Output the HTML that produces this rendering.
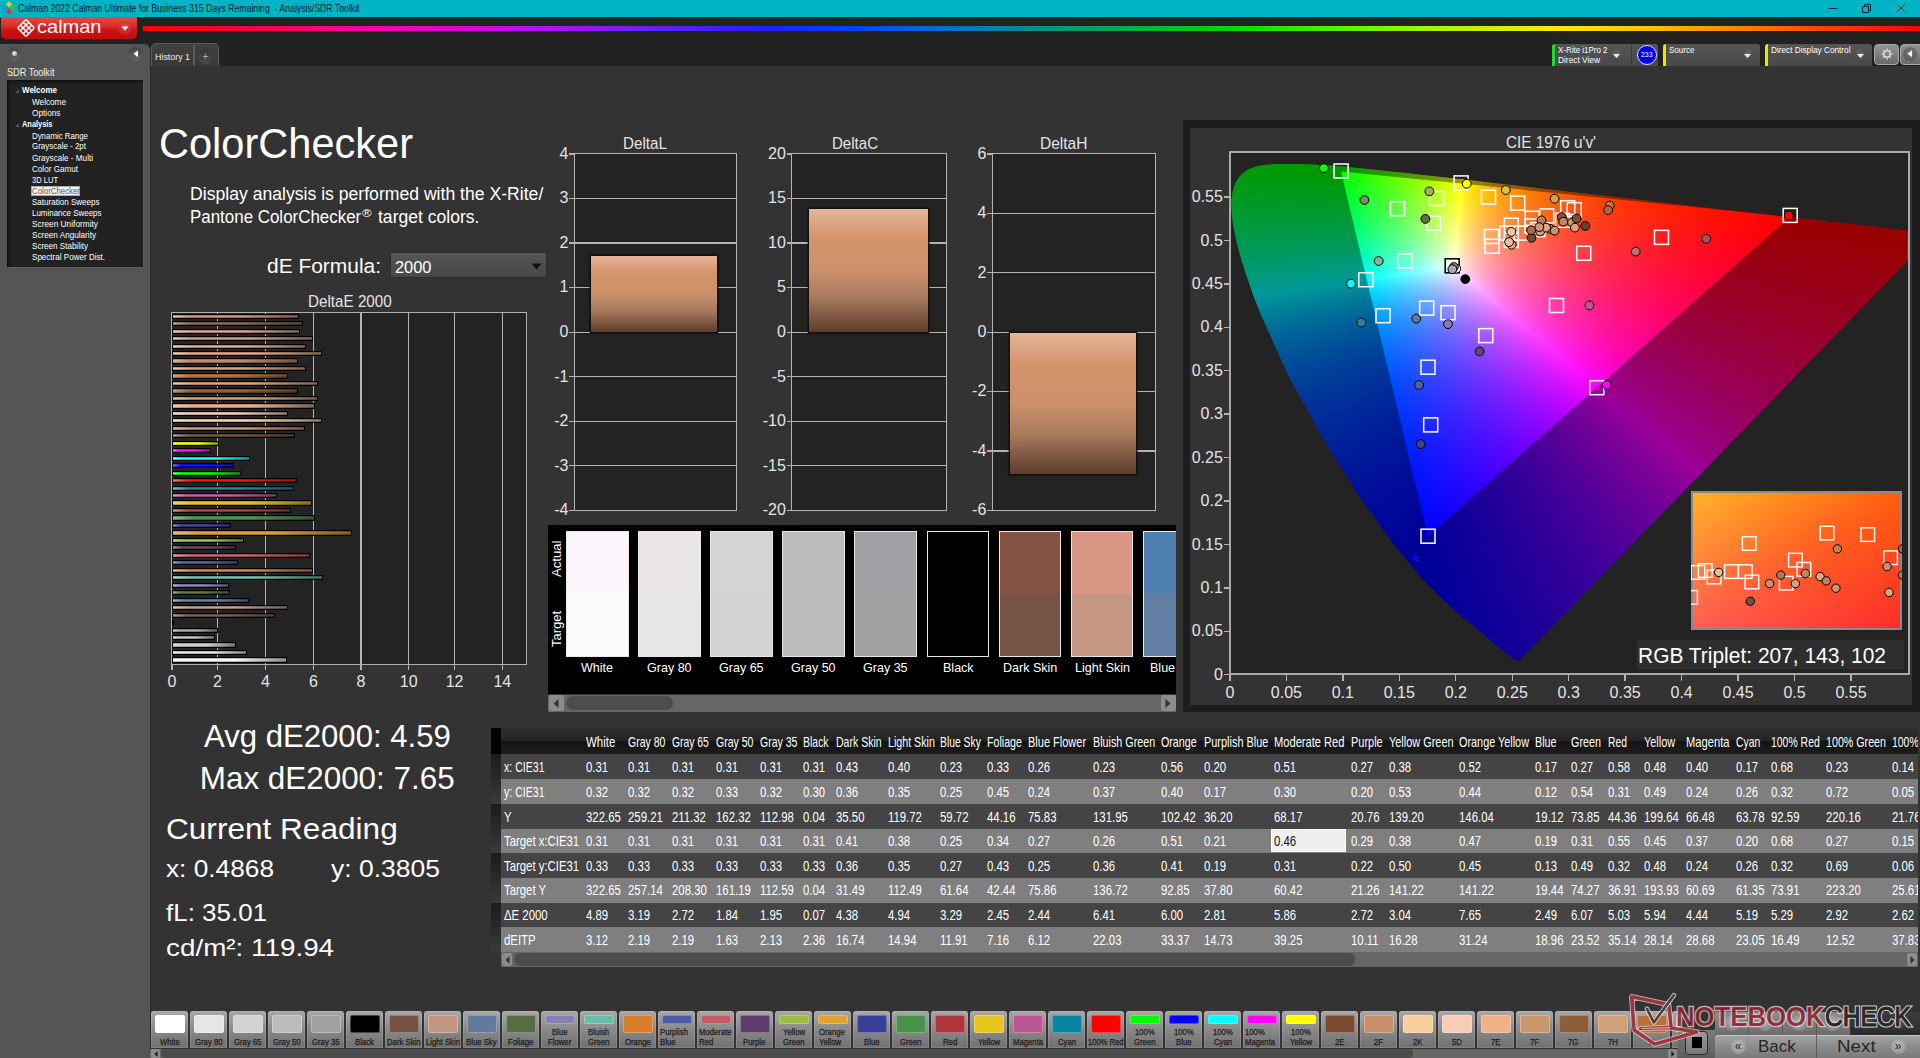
<!DOCTYPE html><html><head><meta charset="utf-8"><title>Calman ColorChecker</title><style>
html,body{margin:0;padding:0;background:#333;overflow:hidden}body{width:1920px;height:1058px;position:relative;font-family:"Liberation Sans", sans-serif}
#app{position:absolute;left:0;top:0;width:1920px;height:1058px;overflow:hidden;background:#333}
#app div,#app svg,#app span{position:absolute}.t{white-space:pre;transform-origin:0 50%;display:block}
</style></head><body><div id="app">
<div style="left:0px;top:0px;width:1920px;height:17px;background:#00b4c5"></div>
<svg style="left:2px;top:1px" width="14" height="14" viewBox="0 0 14 14"><g transform="rotate(45 7 7)"><rect x="2.2" y="2.2" width="4.4" height="4.4" fill="#f2c21a"/><rect x="7.4" y="2.2" width="4.4" height="4.4" fill="#35c435"/><rect x="2.2" y="7.4" width="4.4" height="4.4" fill="#2d8de0"/><rect x="7.4" y="7.4" width="4.4" height="4.4" fill="#e0305a"/></g></svg>
<span class="t" style="left:17.7px;top:3.73px;font-size:10px;line-height:10px;color:#041a20;transform:scaleX(0.8695);white-space:pre;">Calman 2022 Calman Ultimate for Business 315 Days Remaining  - Analysis/SDR Toolkit</span>
<svg style="left:1820px;top:0" width="100" height="17" viewBox="0 0 100 17"><g stroke="#0a2a30" stroke-width="1" fill="none"><path d="M8.5 8.5h9"/><path d="M42.5 6.5h6v6h-6zM44.5 6.5v-2h6v6h-2"/><path d="M77 4l8 8M85 4l-8 8"/></g></svg>
<div style="left:0px;top:17px;width:1920px;height:49px;background:#222"></div>
<div style="left:142.5px;top:26px;width:1777.5px;height:4.5px;background:linear-gradient(90deg,#ff0000 0%,#ff0030 5%,#ff0090 11%,#e800d0 17%,#b010ff 23%,#7020ff 28%,#2020ff 35%,#0040ff 40%,#0070d0 45%,#009090 50%,#00b040 56%,#00d800 61%,#40f000 66%,#90f800 71%,#d0f000 76%,#ffe800 80%,#ffc000 85%,#ff8000 90%,#ff4000 95%,#ff0000 100%)"></div>
<div style="left:1px;top:17.2px;width:135.7px;height:22.3px;background:linear-gradient(#e44a4a,#dc2a2a 45%,#cf1414 55%,#c40c0c);border-radius:0 0 5px 5px;box-shadow:0 1px 0 #6a1010"></div>
<svg style="left:16px;top:18px" width="20" height="20" viewBox="0 0 20 20"><g transform="rotate(45 10 10)" fill="none" stroke="#fff" stroke-width="1.5"><rect x="4" y="4" width="12" height="12" rx="1.5"/><path d="M8 4v12M12 4v12M4 8h12M4 12h12"/></g></svg>
<span class="t" style="left:37px;top:18.16px;font-size:18px;line-height:18px;color:#fff;transform:scaleX(1.1115);">calman</span>
<div style="left:117.5px;top:21px;width:14px;height:14px;border-radius:50%;background:radial-gradient(circle at 50% 35%,#e24a4a,#b81212)"></div>
<svg style="left:120.5px;top:26px" width="8" height="5" viewBox="0 0 8 5"><path d="M0.5 0.5h7L4 4.5z" fill="#fff"/></svg>
<div style="left:0px;top:43.5px;width:150px;height:1015px;background:#555;border-radius:0 6px 0 0"></div>
<div style="left:150px;top:50px;width:1px;height:1008px;background:#2b2b2b"></div>
<div style="left:6.8px;top:46.7px;width:14.6px;height:14.6px;border-radius:50%;background:linear-gradient(#454545,#636363)"></div>
<div style="left:11.7px;top:51px;width:5px;height:5px;border-radius:50%;background:radial-gradient(circle at 40% 35%,#eee,#999)"></div>
<div style="left:128.3px;top:46.7px;width:14.6px;height:14.6px;border-radius:50%;background:linear-gradient(#454545,#636363)"></div>
<svg style="left:133px;top:50px" width="6" height="8" viewBox="0 0 6 8"><path d="M5 0.3v7L0.5 3.8z" fill="#fff"/></svg>
<span class="t" style="left:6.5px;top:67.31px;font-size:10.5px;line-height:10.5px;color:#f0f0f0;transform:scaleX(0.8688);">SDR Toolkit</span>
<div style="left:7px;top:79.5px;width:136px;height:187px;background:#222;box-shadow:inset 2px 2px 3px #111,1px 1px 0 #5e5e5e"></div>
<span class="t" style="left:21.7px;top:85.58px;font-size:9px;line-height:9px;color:#fff;font-weight:700;transform:scaleX(0.8892);">Welcome</span>
<span class="t" style="left:31.5px;top:97.58px;font-size:9px;line-height:9px;color:#fff;transform:scaleX(0.9101);">Welcome</span>
<span class="t" style="left:31.5px;top:108.58px;font-size:9px;line-height:9px;color:#fff;transform:scaleX(0.9184);">Options</span>
<span class="t" style="left:21.7px;top:119.58px;font-size:9px;line-height:9px;color:#fff;font-weight:700;transform:scaleX(0.8236);">Analysis</span>
<span class="t" style="left:31.5px;top:131.58px;font-size:9px;line-height:9px;color:#fff;transform:scaleX(0.8746);">Dynamic Range</span>
<span class="t" style="left:31.5px;top:142.48px;font-size:9px;line-height:9px;color:#fff;transform:scaleX(0.8848);">Grayscale - 2pt</span>
<span class="t" style="left:31.5px;top:153.78px;font-size:9px;line-height:9px;color:#fff;transform:scaleX(0.9035);">Grayscale - Multi</span>
<span class="t" style="left:31.5px;top:165.28px;font-size:9px;line-height:9px;color:#fff;transform:scaleX(0.9014);">Color Gamut</span>
<span class="t" style="left:31.5px;top:175.68px;font-size:9px;line-height:9px;color:#fff;transform:scaleX(0.8383);">3D LUT</span>
<div style="left:30.7px;top:185.5px;width:49.6px;height:10.2px;background:#f2f2f2;border:1px solid #aaa;box-sizing:border-box"></div>
<span class="t" style="left:31.5px;top:186.88px;font-size:9px;line-height:9px;color:#5a5a5a;transform:scaleX(0.8722);">ColorChecker</span>
<span class="t" style="left:31.5px;top:198.18px;font-size:9px;line-height:9px;color:#fff;transform:scaleX(0.8935);">Saturation Sweeps</span>
<span class="t" style="left:31.5px;top:208.98px;font-size:9px;line-height:9px;color:#fff;transform:scaleX(0.8846);">Luminance Sweeps</span>
<span class="t" style="left:31.5px;top:219.98px;font-size:9px;line-height:9px;color:#fff;transform:scaleX(0.9227);">Screen Uniformity</span>
<span class="t" style="left:31.5px;top:231.18px;font-size:9px;line-height:9px;color:#fff;transform:scaleX(0.9072);">Screen Angularity</span>
<span class="t" style="left:31.5px;top:241.98px;font-size:9px;line-height:9px;color:#fff;transform:scaleX(0.8956);">Screen Stability</span>
<span class="t" style="left:31.5px;top:253.18px;font-size:9px;line-height:9px;color:#fff;transform:scaleX(0.8954);">Spectral Power Dist.</span>
<svg style="left:14.5px;top:88.5px" width="4" height="4" viewBox="0 0 4 4"><path d="M4 0v4H0z" fill="#555"/></svg>
<svg style="left:14.5px;top:122.5px" width="4" height="4" viewBox="0 0 4 4"><path d="M4 0v4H0z" fill="#555"/></svg>
<div style="left:150.6px;top:43.2px;width:68.2px;height:23.3px;background:linear-gradient(#414141,#383838);border:1.5px solid #5c5c5c;border-bottom:none;border-radius:5px 5px 0 0;box-sizing:border-box"></div>
<div style="left:193px;top:44.5px;width:1.5px;height:21.5px;background:#5c5c5c"></div>
<span class="t" style="left:154.6px;top:51.56px;font-size:9.5px;line-height:9.5px;color:#f0f0f0;transform:scaleX(0.9337);">History 1</span>
<div style="left:198px;top:49px;width:15px;height:15px;border-radius:50%;background:linear-gradient(#363636,#4c4c4c)"></div>
<span class="t" style="left:202.58px;top:51.73px;font-size:10px;line-height:10px;color:#aaa;">+</span>
<div style="left:1551.7px;top:43.5px;width:106.6px;height:22.5px;background:linear-gradient(#555,#4a4a4a);border-radius:3px 3px 0 0"></div>
<div style="left:1551.7px;top:43.5px;width:3.2px;height:22.5px;background:#22dd22;border-radius:3px 0 0 0"></div>
<span class="t" style="left:1557.5px;top:45.57px;font-size:8.3px;line-height:8.3px;color:#fff;transform:scaleX(0.9583);">X-Rite i1Pro 2</span>
<span class="t" style="left:1557.5px;top:55.97px;font-size:8.3px;line-height:8.3px;color:#fff;transform:scaleX(1.0045);">Direct View</span>
<div style="left:1609.7px;top:48px;width:14px;height:14px;border-radius:50%;background:radial-gradient(circle at 50% 35%,#636363,#3e3e3e)"></div>
<svg style="left:1613.2px;top:53.5px" width="7" height="4" viewBox="0 0 7 4"><path d="M0 0h7L3.5 4z" fill="#eee"/></svg>
<div style="left:1630.5px;top:45px;width:1px;height:21px;background:#3a3a3a"></div>
<div style="left:1636.5px;top:44.7px;width:20px;height:20px;border-radius:50%;background:#0000f0;border:1.2px solid #e0e0ff;box-sizing:border-box"></div>
<span class="t" style="left:1640.75px;top:51.07px;font-size:7.6px;line-height:7.6px;color:#fff;transform:scaleX(0.9075);">233</span>
<div style="left:1662.7px;top:43.5px;width:97.3px;height:22.5px;background:linear-gradient(#555,#4a4a4a);border-radius:3px 3px 0 0"></div>
<div style="left:1662.7px;top:43.5px;width:3.2px;height:22.5px;background:#e8e800;border-radius:3px 0 0 0"></div>
<span class="t" style="left:1668.5px;top:45.57px;font-size:8.3px;line-height:8.3px;color:#fff;transform:scaleX(0.9697);">Source</span>
<div style="left:1740.7px;top:48px;width:14px;height:14px;border-radius:50%;background:radial-gradient(circle at 50% 35%,#636363,#3e3e3e)"></div>
<svg style="left:1744.2px;top:53.5px" width="7" height="4" viewBox="0 0 7 4"><path d="M0 0h7L3.5 4z" fill="#eee"/></svg>
<div style="left:1765px;top:43.5px;width:106.7px;height:22.5px;background:linear-gradient(#555,#4a4a4a);border-radius:3px 3px 0 0"></div>
<div style="left:1765px;top:43.5px;width:3.2px;height:22.5px;background:#e8e800;border-radius:3px 0 0 0"></div>
<span class="t" style="left:1770.8px;top:45.57px;font-size:8.3px;line-height:8.3px;color:#fff;transform:scaleX(0.9908);">Direct Display Control</span>
<div style="left:1853px;top:48px;width:14px;height:14px;border-radius:50%;background:radial-gradient(circle at 50% 35%,#636363,#3e3e3e)"></div>
<svg style="left:1856.5px;top:53.5px" width="7" height="4" viewBox="0 0 7 4"><path d="M0 0h7L3.5 4z" fill="#eee"/></svg>
<div style="left:1874.3px;top:43.5px;width:25px;height:21.5px;background:linear-gradient(#939393,#6a6a6a);border-radius:4px;border:1px solid #a8a8a8;box-sizing:border-box"></div>
<svg style="left:1880px;top:47px" width="14" height="14" viewBox="0 0 14 14"><circle cx="7" cy="7" r="3.1" fill="none" stroke="#ddd" stroke-width="1.3"/><g stroke="#ddd" stroke-width="1.5"><path d="M7 1.6v1.8M7 10.6v1.8M1.6 7h1.8M10.6 7h1.8M3.2 3.2l1.3 1.3M9.5 9.5l1.3 1.3M3.2 10.8l1.3-1.3M9.5 4.5l1.3-1.3"/></g></svg>
<div style="left:1899.7px;top:43.5px;width:21px;height:21.5px;background:linear-gradient(#939393,#6a6a6a);border-radius:4px 0 0 4px;border:1px solid #a8a8a8;box-sizing:border-box"></div>
<div style="left:1903px;top:47px;width:14px;height:14px;border-radius:50%;background:radial-gradient(circle at 50% 40%,#7a7a7a,#505050)"></div>
<svg style="left:1907px;top:50px" width="6" height="8" viewBox="0 0 6 8"><path d="M5 0.3v7L0.5 3.8z" fill="#fff"/></svg>
<span class="t" style="left:159.3px;top:122.75px;font-size:42px;line-height:42px;color:#fff;transform:scaleX(0.9892);">ColorChecker</span>
<span class="t" style="left:190px;top:184.51px;font-size:18.3px;line-height:18.3px;color:#fff;transform:scaleX(0.9632);">Display analysis is performed with the X-Rite/</span>
<span class="t" style="left:190px;top:207.81px;font-size:18.3px;line-height:18.3px;color:#fff;transform:scaleX(0.9256);">Pantone ColorChecker</span>
<span class="t" style="left:362.3px;top:208.29px;font-size:11px;line-height:11px;color:#fff;transform:scaleX(1.1715);">®</span>
<span class="t" style="left:377.6px;top:207.81px;font-size:18.3px;line-height:18.3px;color:#fff;transform:scaleX(0.9596);">target colors.</span>
<span class="t" style="left:266.7px;top:255.65px;font-size:20.5px;line-height:20.5px;color:#fff;transform:scaleX(1.0210);">dE Formula:</span>
<div style="left:390px;top:251.7px;width:156.7px;height:26.6px;background:linear-gradient(#555,#484848);border:1px solid #2c2c2c;box-sizing:border-box;border-radius:1px"></div>
<span class="t" style="left:395px;top:258.53px;font-size:16.5px;line-height:16.5px;color:#fff;transform:scaleX(0.9940);">2000</span>
<svg style="left:530.5px;top:262.5px" width="11" height="7" viewBox="0 0 11 7"><path d="M0.5 0.5h10L5.5 6.5z" fill="#111"/></svg>
<span class="t" style="left:307.5px;top:293.76px;font-size:16px;line-height:16px;color:#e4e4e4;transform:scaleX(0.9510);">DeltaE 2000</span>
<div style="left:171.1px;top:312.1px;width:356px;height:353px;background:#232323;border:1.8px solid #b0b0b0;box-sizing:border-box"></div>
<div style="left:216.75px;top:313px;width:1.5px;height:351.2px;background:#b4b4b4"></div>
<div style="left:264.75px;top:313px;width:1.5px;height:351.2px;background:#b4b4b4"></div>
<div style="left:312.65px;top:313px;width:1.5px;height:351.2px;background:#b4b4b4"></div>
<div style="left:360.25px;top:313px;width:1.5px;height:351.2px;background:#b4b4b4"></div>
<div style="left:407.95px;top:313px;width:1.5px;height:351.2px;background:#b4b4b4"></div>
<div style="left:453.85px;top:313px;width:1.5px;height:351.2px;background:#b4b4b4"></div>
<div style="left:501.55px;top:313px;width:1.5px;height:351.2px;background:#b4b4b4"></div>
<div style="left:172px;top:657.4px;width:115.27px;height:5.2px;background:linear-gradient(180deg,rgba(0,0,0,.3),rgba(255,255,255,.12) 45%,rgba(0,0,0,0) 60%,rgba(0,0,0,.38)),linear-gradient(90deg,#ffffff 0,#ffffff 14%,#ffffff 55%,#8c8c8c 100%);border:solid #000;border-width:1.2px 1.2px 1.2px 0.4px;box-sizing:border-box"></div>
<div style="left:172px;top:649.93px;width:75.13px;height:5.2px;background:linear-gradient(180deg,rgba(0,0,0,.3),rgba(255,255,255,.12) 45%,rgba(0,0,0,0) 60%,rgba(0,0,0,.38)),linear-gradient(90deg,#f0f0f0 0,#e6e6e6 14%,#e6e6e6 55%,#7e7e7e 100%);border:solid #000;border-width:1.2px 1.2px 1.2px 0.4px;box-sizing:border-box"></div>
<div style="left:172px;top:642.45px;width:64.03px;height:5.2px;background:linear-gradient(180deg,rgba(0,0,0,.3),rgba(255,255,255,.12) 45%,rgba(0,0,0,0) 60%,rgba(0,0,0,.38)),linear-gradient(90deg,#e4e4e4 0,#d2d2d2 14%,#d2d2d2 55%,#737373 100%);border:solid #000;border-width:1.2px 1.2px 1.2px 0.4px;box-sizing:border-box"></div>
<div style="left:172px;top:634.98px;width:43.25px;height:5.2px;background:linear-gradient(180deg,rgba(0,0,0,.3),rgba(255,255,255,.12) 45%,rgba(0,0,0,0) 60%,rgba(0,0,0,.38)),linear-gradient(90deg,#d6d6d6 0,#bbbbbb 14%,#bbbbbb 55%,#666666 100%);border:solid #000;border-width:1.2px 1.2px 1.2px 0.4px;box-sizing:border-box"></div>
<div style="left:172px;top:627.51px;width:45.85px;height:5.2px;background:linear-gradient(180deg,rgba(0,0,0,.3),rgba(255,255,255,.12) 45%,rgba(0,0,0,0) 60%,rgba(0,0,0,.38)),linear-gradient(90deg,#c6c6c6 0,#a1a1a1 14%,#a1a1a1 55%,#585858 100%);border:solid #000;border-width:1.2px 1.2px 1.2px 0.4px;box-sizing:border-box"></div>
<div style="left:172px;top:620.03px;width:1.5px;height:5.2px;background:linear-gradient(180deg,rgba(0,0,0,.3),rgba(255,255,255,.12) 45%,rgba(0,0,0,0) 60%,rgba(0,0,0,.38)),linear-gradient(90deg,#666666 0,#000000 14%,#000000 55%,#000000 100%);border:solid #000;border-width:1.2px 1.2px 1.2px 0.4px;box-sizing:border-box"></div>
<div style="left:172px;top:612.56px;width:103.23px;height:5.2px;background:linear-gradient(180deg,rgba(0,0,0,.3),rgba(255,255,255,.12) 45%,rgba(0,0,0,0) 60%,rgba(0,0,0,.38)),linear-gradient(90deg,#ab978e 0,#735244 14%,#735244 55%,#3f2d25 100%);border:solid #000;border-width:1.2px 1.2px 1.2px 0.4px;box-sizing:border-box"></div>
<div style="left:172px;top:605.09px;width:116.45px;height:5.2px;background:linear-gradient(180deg,rgba(0,0,0,.3),rgba(255,255,255,.12) 45%,rgba(0,0,0,0) 60%,rgba(0,0,0,.38)),linear-gradient(90deg,#dac0b4 0,#c29682 14%,#c29682 55%,#6a5247 100%);border:solid #000;border-width:1.2px 1.2px 1.2px 0.4px;box-sizing:border-box"></div>
<div style="left:172px;top:597.62px;width:77.49px;height:5.2px;background:linear-gradient(180deg,rgba(0,0,0,.3),rgba(255,255,255,.12) 45%,rgba(0,0,0,0) 60%,rgba(0,0,0,.38)),linear-gradient(90deg,#a0afc4 0,#627a9d 14%,#627a9d 55%,#354356 100%);border:solid #000;border-width:1.2px 1.2px 1.2px 0.4px;box-sizing:border-box"></div>
<div style="left:172px;top:590.14px;width:57.65px;height:5.2px;background:linear-gradient(180deg,rgba(0,0,0,.3),rgba(255,255,255,.12) 45%,rgba(0,0,0,0) 60%,rgba(0,0,0,.38)),linear-gradient(90deg,#9aa68e 0,#576c43 14%,#576c43 55%,#2f3b24 100%);border:solid #000;border-width:1.2px 1.2px 1.2px 0.4px;box-sizing:border-box"></div>
<div style="left:172px;top:582.67px;width:57.42px;height:5.2px;background:linear-gradient(180deg,rgba(0,0,0,.3),rgba(255,255,255,.12) 45%,rgba(0,0,0,0) 60%,rgba(0,0,0,.38)),linear-gradient(90deg,#b5b2d0 0,#8580b1 14%,#8580b1 55%,#494661 100%);border:solid #000;border-width:1.2px 1.2px 1.2px 0.4px;box-sizing:border-box"></div>
<div style="left:172px;top:575.2px;width:151.16px;height:5.2px;background:linear-gradient(180deg,rgba(0,0,0,.3),rgba(255,255,255,.12) 45%,rgba(0,0,0,0) 60%,rgba(0,0,0,.38)),linear-gradient(90deg,#a3d7cc 0,#67bdaa 14%,#67bdaa 55%,#38675d 100%);border:solid #000;border-width:1.2px 1.2px 1.2px 0.4px;box-sizing:border-box"></div>
<div style="left:172px;top:567.72px;width:141.48px;height:5.2px;background:linear-gradient(180deg,rgba(0,0,0,.3),rgba(255,255,255,.12) 45%,rgba(0,0,0,0) 60%,rgba(0,0,0,.38)),linear-gradient(90deg,#e6b180 0,#d67e2c 14%,#d67e2c 55%,#754518 100%);border:solid #000;border-width:1.2px 1.2px 1.2px 0.4px;box-sizing:border-box"></div>
<div style="left:172px;top:560.25px;width:66.15px;height:5.2px;background:linear-gradient(180deg,rgba(0,0,0,.3),rgba(255,255,255,.12) 45%,rgba(0,0,0,0) 60%,rgba(0,0,0,.38)),linear-gradient(90deg,#969cc9 0,#505ba6 14%,#505ba6 55%,#2c325b 100%);border:solid #000;border-width:1.2px 1.2px 1.2px 0.4px;box-sizing:border-box"></div>
<div style="left:172px;top:552.78px;width:138.17px;height:5.2px;background:linear-gradient(180deg,rgba(0,0,0,.3),rgba(255,255,255,.12) 45%,rgba(0,0,0,0) 60%,rgba(0,0,0,.38)),linear-gradient(90deg,#d99ca1 0,#c15a63 14%,#c15a63 55%,#6a3136 100%);border:solid #000;border-width:1.2px 1.2px 1.2px 0.4px;box-sizing:border-box"></div>
<div style="left:172px;top:545.3px;width:64.03px;height:5.2px;background:linear-gradient(180deg,rgba(0,0,0,.3),rgba(255,255,255,.12) 45%,rgba(0,0,0,0) 60%,rgba(0,0,0,.38)),linear-gradient(90deg,#9e8aa6 0,#5e3c6c 14%,#5e3c6c 55%,#33213b 100%);border:solid #000;border-width:1.2px 1.2px 1.2px 0.4px;box-sizing:border-box"></div>
<div style="left:172px;top:537.83px;width:71.58px;height:5.2px;background:linear-gradient(180deg,rgba(0,0,0,.3),rgba(255,255,255,.12) 45%,rgba(0,0,0,0) 60%,rgba(0,0,0,.38)),linear-gradient(90deg,#c4d68c 0,#9dbc40 14%,#9dbc40 55%,#566723 100%);border:solid #000;border-width:1.2px 1.2px 1.2px 0.4px;box-sizing:border-box"></div>
<div style="left:172px;top:530.36px;width:180.44px;height:5.2px;background:linear-gradient(180deg,rgba(0,0,0,.3),rgba(255,255,255,.12) 45%,rgba(0,0,0,0) 60%,rgba(0,0,0,.38)),linear-gradient(90deg,#ecc781 0,#e0a32e 14%,#e0a32e 55%,#7b5919 100%);border:solid #000;border-width:1.2px 1.2px 1.2px 0.4px;box-sizing:border-box"></div>
<div style="left:172px;top:522.89px;width:58.6px;height:5.2px;background:linear-gradient(180deg,rgba(0,0,0,.3),rgba(255,255,255,.12) 45%,rgba(0,0,0,0) 60%,rgba(0,0,0,.38)),linear-gradient(90deg,#878ac0 0,#383d96 14%,#383d96 55%,#1e2152 100%);border:solid #000;border-width:1.2px 1.2px 1.2px 0.4px;box-sizing:border-box"></div>
<div style="left:172px;top:515.41px;width:143.13px;height:5.2px;background:linear-gradient(180deg,rgba(0,0,0,.3),rgba(255,255,255,.12) 45%,rgba(0,0,0,0) 60%,rgba(0,0,0,.38)),linear-gradient(90deg,#90be91 0,#469449 14%,#469449 55%,#265128 100%);border:solid #000;border-width:1.2px 1.2px 1.2px 0.4px;box-sizing:border-box"></div>
<div style="left:172px;top:507.94px;width:118.58px;height:5.2px;background:linear-gradient(180deg,rgba(0,0,0,.3),rgba(255,255,255,.12) 45%,rgba(0,0,0,0) 60%,rgba(0,0,0,.38)),linear-gradient(90deg,#cf868a 0,#af363c 14%,#af363c 55%,#601d21 100%);border:solid #000;border-width:1.2px 1.2px 1.2px 0.4px;box-sizing:border-box"></div>
<div style="left:172px;top:500.47px;width:140.06px;height:5.2px;background:linear-gradient(180deg,rgba(0,0,0,.3),rgba(255,255,255,.12) 45%,rgba(0,0,0,0) 60%,rgba(0,0,0,.38)),linear-gradient(90deg,#f0dd78 0,#e7c71f 14%,#e7c71f 55%,#7f6d11 100%);border:solid #000;border-width:1.2px 1.2px 1.2px 0.4px;box-sizing:border-box"></div>
<div style="left:172px;top:492.99px;width:104.64px;height:5.2px;background:linear-gradient(180deg,rgba(0,0,0,.3),rgba(255,255,255,.12) 45%,rgba(0,0,0,0) 60%,rgba(0,0,0,.38)),linear-gradient(90deg,#d699bf 0,#bb5695 14%,#bb5695 55%,#662f51 100%);border:solid #000;border-width:1.2px 1.2px 1.2px 0.4px;box-sizing:border-box"></div>
<div style="left:172px;top:485.52px;width:122.35px;height:5.2px;background:linear-gradient(180deg,rgba(0,0,0,.3),rgba(255,255,255,.12) 45%,rgba(0,0,0,0) 60%,rgba(0,0,0,.38)),linear-gradient(90deg,#6ab5c6 0,#0885a1 14%,#0885a1 55%,#044958 100%);border:solid #000;border-width:1.2px 1.2px 1.2px 0.4px;box-sizing:border-box"></div>
<div style="left:172px;top:478.05px;width:124.71px;height:5.2px;background:linear-gradient(180deg,rgba(0,0,0,.3),rgba(255,255,255,.12) 45%,rgba(0,0,0,0) 60%,rgba(0,0,0,.38)),linear-gradient(90deg,#ff6666 0,#ff0000 14%,#ff0000 55%,#8c0000 100%);border:solid #000;border-width:1.2px 1.2px 1.2px 0.4px;box-sizing:border-box"></div>
<div style="left:172px;top:470.57px;width:68.75px;height:5.2px;background:linear-gradient(180deg,rgba(0,0,0,.3),rgba(255,255,255,.12) 45%,rgba(0,0,0,0) 60%,rgba(0,0,0,.38)),linear-gradient(90deg,#66ff66 0,#00ff00 14%,#00ff00 55%,#008c00 100%);border:solid #000;border-width:1.2px 1.2px 1.2px 0.4px;box-sizing:border-box"></div>
<div style="left:172px;top:463.1px;width:61.67px;height:5.2px;background:linear-gradient(180deg,rgba(0,0,0,.3),rgba(255,255,255,.12) 45%,rgba(0,0,0,0) 60%,rgba(0,0,0,.38)),linear-gradient(90deg,#6666ff 0,#0000ff 14%,#0000ff 55%,#00008c 100%);border:solid #000;border-width:1.2px 1.2px 1.2px 0.4px;box-sizing:border-box"></div>
<div style="left:172px;top:455.63px;width:77.72px;height:5.2px;background:linear-gradient(180deg,rgba(0,0,0,.3),rgba(255,255,255,.12) 45%,rgba(0,0,0,0) 60%,rgba(0,0,0,.38)),linear-gradient(90deg,#66ffff 0,#00ffff 14%,#00ffff 55%,#008c8c 100%);border:solid #000;border-width:1.2px 1.2px 1.2px 0.4px;box-sizing:border-box"></div>
<div style="left:172px;top:448.16px;width:39.47px;height:5.2px;background:linear-gradient(180deg,rgba(0,0,0,.3),rgba(255,255,255,.12) 45%,rgba(0,0,0,0) 60%,rgba(0,0,0,.38)),linear-gradient(90deg,#ff66ff 0,#ff00ff 14%,#ff00ff 55%,#8c008c 100%);border:solid #000;border-width:1.2px 1.2px 1.2px 0.4px;box-sizing:border-box"></div>
<div style="left:172px;top:440.68px;width:47.03px;height:5.2px;background:linear-gradient(180deg,rgba(0,0,0,.3),rgba(255,255,255,.12) 45%,rgba(0,0,0,0) 60%,rgba(0,0,0,.38)),linear-gradient(90deg,#ffff66 0,#ffff00 14%,#ffff00 55%,#8c8c00 100%);border:solid #000;border-width:1.2px 1.2px 1.2px 0.4px;box-sizing:border-box"></div>
<div style="left:172px;top:433.21px;width:122.59px;height:5.2px;background:linear-gradient(180deg,rgba(0,0,0,.3),rgba(255,255,255,.12) 45%,rgba(0,0,0,0) 60%,rgba(0,0,0,.38)),linear-gradient(90deg,#af9282 0,#7a4a30 14%,#7a4a30 55%,#43281a 100%);border:solid #000;border-width:1.2px 1.2px 1.2px 0.4px;box-sizing:border-box"></div>
<div style="left:172px;top:425.74px;width:132.98px;height:5.2px;background:linear-gradient(180deg,rgba(0,0,0,.3),rgba(255,255,255,.12) 45%,rgba(0,0,0,0) 60%,rgba(0,0,0,.38)),linear-gradient(90deg,#debca5 0,#c8906a 14%,#c8906a 55%,#6e4f3a 100%);border:solid #000;border-width:1.2px 1.2px 1.2px 0.4px;box-sizing:border-box"></div>
<div style="left:172px;top:418.26px;width:149.98px;height:5.2px;background:linear-gradient(180deg,rgba(0,0,0,.3),rgba(255,255,255,.12) 45%,rgba(0,0,0,0) 60%,rgba(0,0,0,.38)),linear-gradient(90deg,#fae2c6 0,#f8d0a0 14%,#f8d0a0 55%,#887258 100%);border:solid #000;border-width:1.2px 1.2px 1.2px 0.4px;box-sizing:border-box"></div>
<div style="left:172px;top:410.79px;width:116.21px;height:5.2px;background:linear-gradient(180deg,rgba(0,0,0,.3),rgba(255,255,255,.12) 45%,rgba(0,0,0,0) 60%,rgba(0,0,0,.38)),linear-gradient(90deg,#fae1d4 0,#f8cdb8 14%,#f8cdb8 55%,#887065 100%);border:solid #000;border-width:1.2px 1.2px 1.2px 0.4px;box-sizing:border-box"></div>
<div style="left:172px;top:403.32px;width:142.9px;height:5.2px;background:linear-gradient(180deg,rgba(0,0,0,.3),rgba(255,255,255,.12) 45%,rgba(0,0,0,0) 60%,rgba(0,0,0,.38)),linear-gradient(90deg,#f6cfb7 0,#f0b088 14%,#f0b088 55%,#84604a 100%);border:solid #000;border-width:1.2px 1.2px 1.2px 0.4px;box-sizing:border-box"></div>
<div style="left:172px;top:395.84px;width:145.73px;height:5.2px;background:linear-gradient(180deg,rgba(0,0,0,.3),rgba(255,255,255,.12) 45%,rgba(0,0,0,0) 60%,rgba(0,0,0,.38)),linear-gradient(90deg,#dec1a4 0,#c89868 14%,#c89868 55%,#6e5339 100%);border:solid #000;border-width:1.2px 1.2px 1.2px 0.4px;box-sizing:border-box"></div>
<div style="left:172px;top:388.37px;width:125.66px;height:5.2px;background:linear-gradient(180deg,rgba(0,0,0,.3),rgba(255,255,255,.12) 45%,rgba(0,0,0,0) 60%,rgba(0,0,0,.38)),linear-gradient(90deg,#ba9e87 0,#8d5e38 14%,#8d5e38 55%,#4d331e 100%);border:solid #000;border-width:1.2px 1.2px 1.2px 0.4px;box-sizing:border-box"></div>
<div style="left:172px;top:380.9px;width:145.73px;height:5.2px;background:linear-gradient(180deg,rgba(0,0,0,.3),rgba(255,255,255,.12) 45%,rgba(0,0,0,0) 60%,rgba(0,0,0,.38)),linear-gradient(90deg,#e2c6ae 0,#d0a078 14%,#d0a078 55%,#725842 100%);border:solid #000;border-width:1.2px 1.2px 1.2px 0.4px;box-sizing:border-box"></div>
<div style="left:172px;top:373.43px;width:116.21px;height:5.2px;background:linear-gradient(180deg,rgba(0,0,0,.3),rgba(255,255,255,.12) 45%,rgba(0,0,0,0) 60%,rgba(0,0,0,.38)),linear-gradient(90deg,#d4a988 0,#b8703a 14%,#b8703a 55%,#653d1f 100%);border:solid #000;border-width:1.2px 1.2px 1.2px 0.4px;box-sizing:border-box"></div>
<div style="left:172px;top:365.95px;width:134.4px;height:5.2px;background:linear-gradient(180deg,rgba(0,0,0,.3),rgba(255,255,255,.12) 45%,rgba(0,0,0,0) 60%,rgba(0,0,0,.38)),linear-gradient(90deg,#e7c1a6 0,#d8986c 14%,#d8986c 55%,#76533b 100%);border:solid #000;border-width:1.2px 1.2px 1.2px 0.4px;box-sizing:border-box"></div>
<div style="left:172px;top:358.48px;width:125.66px;height:5.2px;background:linear-gradient(180deg,rgba(0,0,0,.3),rgba(255,255,255,.12) 45%,rgba(0,0,0,0) 60%,rgba(0,0,0,.38)),linear-gradient(90deg,#deb79f 0,#c88860 14%,#c88860 55%,#6e4a34 100%);border:solid #000;border-width:1.2px 1.2px 1.2px 0.4px;box-sizing:border-box"></div>
<div style="left:172px;top:351.01px;width:149.98px;height:5.2px;background:linear-gradient(180deg,rgba(0,0,0,.3),rgba(255,255,255,.12) 45%,rgba(0,0,0,0) 60%,rgba(0,0,0,.38)),linear-gradient(90deg,#f1c6ae 0,#e8a078 14%,#e8a078 55%,#7f5842 100%);border:solid #000;border-width:1.2px 1.2px 1.2px 0.4px;box-sizing:border-box"></div>
<div style="left:172px;top:343.53px;width:134.4px;height:5.2px;background:linear-gradient(180deg,rgba(0,0,0,.3),rgba(255,255,255,.12) 45%,rgba(0,0,0,0) 60%,rgba(0,0,0,.38)),linear-gradient(90deg,#e7cab7 0,#d8a888 14%,#d8a888 55%,#765c4a 100%);border:solid #000;border-width:1.2px 1.2px 1.2px 0.4px;box-sizing:border-box"></div>
<div style="left:172px;top:336.06px;width:141.24px;height:5.2px;background:linear-gradient(180deg,rgba(0,0,0,.3),rgba(255,255,255,.12) 45%,rgba(0,0,0,0) 60%,rgba(0,0,0,.38)),linear-gradient(90deg,#dec1af 0,#c8987a 14%,#c8987a 55%,#6e5343 100%);border:solid #000;border-width:1.2px 1.2px 1.2px 0.4px;box-sizing:border-box"></div>
<div style="left:172px;top:328.59px;width:128.49px;height:5.2px;background:linear-gradient(180deg,rgba(0,0,0,.3),rgba(255,255,255,.12) 45%,rgba(0,0,0,0) 60%,rgba(0,0,0,.38)),linear-gradient(90deg,#e7c6b2 0,#d8a080 14%,#d8a080 55%,#765846 100%);border:solid #000;border-width:1.2px 1.2px 1.2px 0.4px;box-sizing:border-box"></div>
<div style="left:172px;top:321.12px;width:131.33px;height:5.2px;background:linear-gradient(180deg,rgba(0,0,0,.3),rgba(255,255,255,.12) 45%,rgba(0,0,0,0) 60%,rgba(0,0,0,.38)),linear-gradient(90deg,#b89f8c 0,#8a6040 14%,#8a6040 55%,#4b3423 100%);border:solid #000;border-width:1.2px 1.2px 1.2px 0.4px;box-sizing:border-box"></div>
<div style="left:172px;top:313.64px;width:127.31px;height:5.2px;background:linear-gradient(180deg,rgba(0,0,0,.3),rgba(255,255,255,.12) 45%,rgba(0,0,0,0) 60%,rgba(0,0,0,.38)),linear-gradient(90deg,#e7bca4 0,#d89068 14%,#d89068 55%,#764f39 100%);border:solid #000;border-width:1.2px 1.2px 1.2px 0.4px;box-sizing:border-box"></div>
<div style="left:171.25px;top:664.2px;width:1.5px;height:5.8px;background:#b4b4b4"></div>
<span class="t" style="left:167.55px;top:674.06px;font-size:16px;line-height:16px;color:#e4e4e4;">0</span>
<div style="left:216.75px;top:664.2px;width:1.5px;height:5.8px;background:#b4b4b4"></div>
<span class="t" style="left:213.05px;top:674.06px;font-size:16px;line-height:16px;color:#e4e4e4;">2</span>
<div style="left:264.75px;top:664.2px;width:1.5px;height:5.8px;background:#b4b4b4"></div>
<span class="t" style="left:261.05px;top:674.06px;font-size:16px;line-height:16px;color:#e4e4e4;">4</span>
<div style="left:312.65px;top:664.2px;width:1.5px;height:5.8px;background:#b4b4b4"></div>
<span class="t" style="left:308.95px;top:674.06px;font-size:16px;line-height:16px;color:#e4e4e4;">6</span>
<div style="left:360.25px;top:664.2px;width:1.5px;height:5.8px;background:#b4b4b4"></div>
<span class="t" style="left:356.55px;top:674.06px;font-size:16px;line-height:16px;color:#e4e4e4;">8</span>
<div style="left:407.95px;top:664.2px;width:1.5px;height:5.8px;background:#b4b4b4"></div>
<span class="t" style="left:399.8px;top:674.06px;font-size:16px;line-height:16px;color:#e4e4e4;">10</span>
<div style="left:453.85px;top:664.2px;width:1.5px;height:5.8px;background:#b4b4b4"></div>
<span class="t" style="left:445.7px;top:674.06px;font-size:16px;line-height:16px;color:#e4e4e4;">12</span>
<div style="left:501.55px;top:664.2px;width:1.5px;height:5.8px;background:#b4b4b4"></div>
<span class="t" style="left:493.4px;top:674.06px;font-size:16px;line-height:16px;color:#e4e4e4;">14</span>
<span class="t" style="left:203.7px;top:720.52px;font-size:31.4px;line-height:31.4px;color:#fff;transform:scaleX(0.9911);">Avg dE2000: 4.59</span>
<span class="t" style="left:199.8px;top:762.92px;font-size:31.4px;line-height:31.4px;color:#fff;">Max dE2000: 7.65</span>
<span class="t" style="left:165.9px;top:814.44px;font-size:29.6px;line-height:29.6px;color:#fff;transform:scaleX(1.0670);">Current Reading</span>
<span class="t" style="left:165.9px;top:856.58px;font-size:24px;line-height:24px;color:#fff;transform:scaleX(1.0937);">x: 0.4868</span>
<span class="t" style="left:331.4px;top:856.58px;font-size:24px;line-height:24px;color:#fff;transform:scaleX(1.1038);">y: 0.3805</span>
<span class="t" style="left:165.9px;top:900.78px;font-size:24px;line-height:24px;color:#fff;transform:scaleX(1.0822);">fL: 35.01</span>
<span class="t" style="left:165.9px;top:936.48px;font-size:24px;line-height:24px;color:#fff;transform:scaleX(1.1596);">cd/m²: 119.94</span>
<span class="t" style="left:623.1px;top:135.66px;font-size:16px;line-height:16px;color:#e4e4e4;transform:scaleX(0.9514);">DeltaL</span>
<div style="left:573.9px;top:153.1px;width:163.6px;height:358.1px;background:#232323;border:1.8px solid #b4b4b4;box-sizing:border-box"></div>
<div style="left:569.3px;top:509.65px;width:5.5px;height:1.3px;background:#b4b4b4"></div>
<span class="t" style="left:554.27px;top:502.16px;font-size:16px;line-height:16px;color:#e4e4e4;">-4</span>
<div style="left:574.8px;top:465.11px;width:161.8px;height:1.3px;background:#b4b4b4"></div>
<div style="left:569.3px;top:465.11px;width:5.5px;height:1.3px;background:#b4b4b4"></div>
<span class="t" style="left:554.27px;top:457.62px;font-size:16px;line-height:16px;color:#e4e4e4;">-3</span>
<div style="left:574.8px;top:420.58px;width:161.8px;height:1.3px;background:#b4b4b4"></div>
<div style="left:569.3px;top:420.58px;width:5.5px;height:1.3px;background:#b4b4b4"></div>
<span class="t" style="left:554.27px;top:413.08px;font-size:16px;line-height:16px;color:#e4e4e4;">-2</span>
<div style="left:574.8px;top:376.04px;width:161.8px;height:1.3px;background:#b4b4b4"></div>
<div style="left:569.3px;top:376.04px;width:5.5px;height:1.3px;background:#b4b4b4"></div>
<span class="t" style="left:554.27px;top:368.54px;font-size:16px;line-height:16px;color:#e4e4e4;">-1</span>
<div style="left:574.8px;top:331.5px;width:161.8px;height:1.3px;background:#b4b4b4"></div>
<div style="left:569.3px;top:331.5px;width:5.5px;height:1.3px;background:#b4b4b4"></div>
<span class="t" style="left:559.59px;top:324.01px;font-size:16px;line-height:16px;color:#e4e4e4;">0</span>
<div style="left:574.8px;top:286.96px;width:161.8px;height:1.3px;background:#b4b4b4"></div>
<div style="left:569.3px;top:286.96px;width:5.5px;height:1.3px;background:#b4b4b4"></div>
<span class="t" style="left:559.59px;top:279.47px;font-size:16px;line-height:16px;color:#e4e4e4;">1</span>
<div style="left:574.8px;top:242.42px;width:161.8px;height:1.3px;background:#b4b4b4"></div>
<div style="left:569.3px;top:242.42px;width:5.5px;height:1.3px;background:#b4b4b4"></div>
<span class="t" style="left:559.59px;top:234.93px;font-size:16px;line-height:16px;color:#e4e4e4;">2</span>
<div style="left:574.8px;top:197.89px;width:161.8px;height:1.3px;background:#b4b4b4"></div>
<div style="left:569.3px;top:197.89px;width:5.5px;height:1.3px;background:#b4b4b4"></div>
<span class="t" style="left:559.59px;top:190.39px;font-size:16px;line-height:16px;color:#e4e4e4;">3</span>
<div style="left:569.3px;top:153.35px;width:5.5px;height:1.3px;background:#b4b4b4"></div>
<span class="t" style="left:559.59px;top:145.86px;font-size:16px;line-height:16px;color:#e4e4e4;">4</span>
<div style="left:590.3px;top:255.49px;width:128.2px;height:77.16px;background:linear-gradient(#e6b59a 0%,#d4946c 22%,#cc906a 50%,#a87a5e 72%,#5c3d2c 100%);border:1px solid #111;box-sizing:border-box;box-shadow:0 0 2px #000"></div>
<span class="t" style="left:831.6px;top:135.66px;font-size:16px;line-height:16px;color:#e4e4e4;transform:scaleX(0.9406);">DeltaC</span>
<div style="left:791.3px;top:153.1px;width:156px;height:358.1px;background:#232323;border:1.8px solid #b4b4b4;box-sizing:border-box"></div>
<div style="left:786.7px;top:509.65px;width:5.5px;height:1.3px;background:#b4b4b4"></div>
<span class="t" style="left:762.78px;top:502.16px;font-size:16px;line-height:16px;color:#e4e4e4;">-20</span>
<div style="left:792.2px;top:465.11px;width:154.2px;height:1.3px;background:#b4b4b4"></div>
<div style="left:786.7px;top:465.11px;width:5.5px;height:1.3px;background:#b4b4b4"></div>
<span class="t" style="left:762.78px;top:457.62px;font-size:16px;line-height:16px;color:#e4e4e4;">-15</span>
<div style="left:792.2px;top:420.58px;width:154.2px;height:1.3px;background:#b4b4b4"></div>
<div style="left:786.7px;top:420.58px;width:5.5px;height:1.3px;background:#b4b4b4"></div>
<span class="t" style="left:762.78px;top:413.08px;font-size:16px;line-height:16px;color:#e4e4e4;">-10</span>
<div style="left:792.2px;top:376.04px;width:154.2px;height:1.3px;background:#b4b4b4"></div>
<div style="left:786.7px;top:376.04px;width:5.5px;height:1.3px;background:#b4b4b4"></div>
<span class="t" style="left:771.67px;top:368.54px;font-size:16px;line-height:16px;color:#e4e4e4;">-5</span>
<div style="left:792.2px;top:331.5px;width:154.2px;height:1.3px;background:#b4b4b4"></div>
<div style="left:786.7px;top:331.5px;width:5.5px;height:1.3px;background:#b4b4b4"></div>
<span class="t" style="left:776.99px;top:324.01px;font-size:16px;line-height:16px;color:#e4e4e4;">0</span>
<div style="left:792.2px;top:286.96px;width:154.2px;height:1.3px;background:#b4b4b4"></div>
<div style="left:786.7px;top:286.96px;width:5.5px;height:1.3px;background:#b4b4b4"></div>
<span class="t" style="left:776.99px;top:279.47px;font-size:16px;line-height:16px;color:#e4e4e4;">5</span>
<div style="left:792.2px;top:242.42px;width:154.2px;height:1.3px;background:#b4b4b4"></div>
<div style="left:786.7px;top:242.42px;width:5.5px;height:1.3px;background:#b4b4b4"></div>
<span class="t" style="left:768.1px;top:234.93px;font-size:16px;line-height:16px;color:#e4e4e4;">10</span>
<div style="left:792.2px;top:197.89px;width:154.2px;height:1.3px;background:#b4b4b4"></div>
<div style="left:786.7px;top:197.89px;width:5.5px;height:1.3px;background:#b4b4b4"></div>
<span class="t" style="left:768.1px;top:190.39px;font-size:16px;line-height:16px;color:#e4e4e4;">15</span>
<div style="left:786.7px;top:153.35px;width:5.5px;height:1.3px;background:#b4b4b4"></div>
<span class="t" style="left:768.1px;top:145.86px;font-size:16px;line-height:16px;color:#e4e4e4;">20</span>
<div style="left:808px;top:208.1px;width:121.4px;height:124.55px;background:linear-gradient(#e6b59a 0%,#d4946c 22%,#cc906a 50%,#a87a5e 72%,#5c3d2c 100%);border:1px solid #111;box-sizing:border-box;box-shadow:0 0 2px #000"></div>
<span class="t" style="left:1039.95px;top:135.66px;font-size:16px;line-height:16px;color:#e4e4e4;transform:scaleX(0.9672);">DeltaH</span>
<div style="left:991.7px;top:153.1px;width:164.7px;height:358.1px;background:#232323;border:1.8px solid #b4b4b4;box-sizing:border-box"></div>
<div style="left:987.1px;top:509.65px;width:5.5px;height:1.3px;background:#b4b4b4"></div>
<span class="t" style="left:972.07px;top:502.16px;font-size:16px;line-height:16px;color:#e4e4e4;">-6</span>
<div style="left:992.6px;top:450.27px;width:162.9px;height:1.3px;background:#b4b4b4"></div>
<div style="left:987.1px;top:450.27px;width:5.5px;height:1.3px;background:#b4b4b4"></div>
<span class="t" style="left:972.07px;top:442.77px;font-size:16px;line-height:16px;color:#e4e4e4;">-4</span>
<div style="left:992.6px;top:390.88px;width:162.9px;height:1.3px;background:#b4b4b4"></div>
<div style="left:987.1px;top:390.88px;width:5.5px;height:1.3px;background:#b4b4b4"></div>
<span class="t" style="left:972.07px;top:383.39px;font-size:16px;line-height:16px;color:#e4e4e4;">-2</span>
<div style="left:992.6px;top:331.5px;width:162.9px;height:1.3px;background:#b4b4b4"></div>
<div style="left:987.1px;top:331.5px;width:5.5px;height:1.3px;background:#b4b4b4"></div>
<span class="t" style="left:977.39px;top:324.01px;font-size:16px;line-height:16px;color:#e4e4e4;">0</span>
<div style="left:992.6px;top:272.12px;width:162.9px;height:1.3px;background:#b4b4b4"></div>
<div style="left:987.1px;top:272.12px;width:5.5px;height:1.3px;background:#b4b4b4"></div>
<span class="t" style="left:977.39px;top:264.62px;font-size:16px;line-height:16px;color:#e4e4e4;">2</span>
<div style="left:992.6px;top:212.73px;width:162.9px;height:1.3px;background:#b4b4b4"></div>
<div style="left:987.1px;top:212.73px;width:5.5px;height:1.3px;background:#b4b4b4"></div>
<span class="t" style="left:977.39px;top:205.24px;font-size:16px;line-height:16px;color:#e4e4e4;">4</span>
<div style="left:987.1px;top:153.35px;width:5.5px;height:1.3px;background:#b4b4b4"></div>
<span class="t" style="left:977.39px;top:145.86px;font-size:16px;line-height:16px;color:#e4e4e4;">6</span>
<div style="left:1008.8px;top:331.65px;width:128.6px;height:142.93px;background:linear-gradient(#e6b59a 0%,#d4946c 22%,#cc906a 50%,#a87a5e 72%,#5c3d2c 100%);border:1px solid #111;box-sizing:border-box;box-shadow:0 0 2px #000"></div>
<div style="left:548.1px;top:524.9px;width:627.6px;height:169.6px;background:#000"></div>
<div style="left:548.1px;top:524.9px;width:627.6px;height:169.6px;overflow:hidden">
<div style="left:17.9px;top:6.4px;width:62.6px;height:125.7px;background:linear-gradient(#fdf7fd 0,#fdf7fd 49.9%,#fafafa 50%,#fafafa 100%);border:1px solid #e8e8e8;box-sizing:border-box"></div>
<span class="t" style="left:33.18px;top:135.83px;font-size:13.2px;line-height:13.2px;color:#fff;transform:scaleX(0.9500);">White</span>
<div style="left:90.02px;top:6.4px;width:62.6px;height:125.7px;background:linear-gradient(#e9e5e9 0,#e9e5e9 49.9%,#e6e6e6 50%,#e6e6e6 100%);border:1px solid #e8e8e8;box-sizing:border-box"></div>
<span class="t" style="left:99.03px;top:135.83px;font-size:13.2px;line-height:13.2px;color:#fff;transform:scaleX(0.9500);">Gray 80</span>
<div style="left:162.14px;top:6.4px;width:62.6px;height:125.7px;background:linear-gradient(#d5d3d6 0,#d5d3d6 49.9%,#d2d2d2 50%,#d2d2d2 100%);border:1px solid #e8e8e8;box-sizing:border-box"></div>
<span class="t" style="left:171.15px;top:135.83px;font-size:13.2px;line-height:13.2px;color:#fff;transform:scaleX(0.9500);">Gray 65</span>
<div style="left:234.26px;top:6.4px;width:62.6px;height:125.7px;background:linear-gradient(#bdbcbe 0,#bdbcbe 49.9%,#bbbbbb 50%,#bbbbbb 100%);border:1px solid #e8e8e8;box-sizing:border-box"></div>
<span class="t" style="left:243.27px;top:135.83px;font-size:13.2px;line-height:13.2px;color:#fff;transform:scaleX(0.9500);">Gray 50</span>
<div style="left:306.38px;top:6.4px;width:62.6px;height:125.7px;background:linear-gradient(#a19fa3 0,#a19fa3 49.9%,#a1a1a1 50%,#a1a1a1 100%);border:1px solid #e8e8e8;box-sizing:border-box"></div>
<span class="t" style="left:315.39px;top:135.83px;font-size:13.2px;line-height:13.2px;color:#fff;transform:scaleX(0.9500);">Gray 35</span>
<div style="left:378.5px;top:6.4px;width:62.6px;height:125.7px;background:linear-gradient(#000 0,#000 49.9%,#000 50%,#000 100%);border:1px solid #e8e8e8;box-sizing:border-box"></div>
<span class="t" style="left:394.48px;top:135.83px;font-size:13.2px;line-height:13.2px;color:#fff;transform:scaleX(0.9500);">Black</span>
<div style="left:450.62px;top:6.4px;width:62.6px;height:125.7px;background:linear-gradient(#865244 0,#865244 49.9%,#775246 50%,#775246 100%);border:1px solid #e8e8e8;box-sizing:border-box"></div>
<span class="t" style="left:454.76px;top:135.83px;font-size:13.2px;line-height:13.2px;color:#fff;transform:scaleX(0.9500);">Dark Skin</span>
<div style="left:522.74px;top:6.4px;width:62.6px;height:125.7px;background:linear-gradient(#d99683 0,#d99683 49.9%,#c59783 50%,#c59783 100%);border:1px solid #e8e8e8;box-sizing:border-box"></div>
<span class="t" style="left:526.53px;top:135.83px;font-size:13.2px;line-height:13.2px;color:#fff;transform:scaleX(0.9500);">Light Skin</span>
<div style="left:594.86px;top:6.4px;width:62.6px;height:125.7px;background:linear-gradient(#4f7fae 0,#4f7fae 49.9%,#627ea3 50%,#627ea3 100%);border:1px solid #e8e8e8;box-sizing:border-box"></div>
<span class="t" style="left:601.44px;top:135.83px;font-size:13.2px;line-height:13.2px;color:#fff;transform:scaleX(0.9500);">Blue Sky</span>
</div>
<span class="t" style="left:550.3px;top:577.3px;font-size:13.2px;line-height:14px;color:#fff;transform-origin:0 0;transform:rotate(-90deg) scaleX(0.996)">Actual</span>
<span class="t" style="left:550.3px;top:646.8px;font-size:13.2px;line-height:14px;color:#fff;transform-origin:0 0;transform:rotate(-90deg) scaleX(0.988)">Target</span>
<div style="left:548.1px;top:694.5px;width:627.6px;height:17px;background:#666"></div>
<div style="left:548.5px;top:695px;width:15px;height:16px;background:#8c8c8c;border-radius:2px"></div>
<div style="left:1160.5px;top:695px;width:15px;height:16px;background:#8c8c8c;border-radius:2px"></div>
<svg style="left:553px;top:698.5px" width="6" height="9" viewBox="0 0 6 9"><path d="M5.5 0v9L0.5 4.5z" fill="#333"/></svg>
<svg style="left:1165px;top:698.5px" width="6" height="9" viewBox="0 0 6 9"><path d="M0.5 0v9l5-4.5z" fill="#333"/></svg>
<div style="left:566px;top:696px;width:107px;height:14px;background:#4d4d4d;border-radius:7px"></div>
<div style="left:1183px;top:120.2px;width:737px;height:591.7px;background:#1d1d1d"></div>
<div style="left:1189.9px;top:127.7px;width:722.6px;height:577.2px;background:#333"></div>
<span class="t" style="left:1506px;top:134.56px;font-size:16px;line-height:16px;color:#e4e4e4;transform:scaleX(0.9557);">CIE 1976 u'v'</span>
<div style="left:1229px;top:151.2px;width:680.8px;height:523.8px;background:#232323;border:2px solid #aaa;box-sizing:border-box"></div>
<div style="left:1231.2px;top:153.4px;width:676.4px;height:520.6px;overflow:hidden">
<div style="left:0;top:0;width:676.4px;height:520.6px;clip-path:polygon(288.71px 506.56px,287.46px 507.14px,283.52px 506.31px,276.64px 501.32px,263.73px 490.54px,254.63px 483px,242.7px 473.2px,228.33px 461.16px,210.69px 445.21px,189.51px 423.61px,161.41px 389.64px,128.22px 343.19px,92.22px 285.38px,57.58px 222.86px,30.5px 162.84px,25.09px 149.22px,20.22px 136.14px,15.89px 123.75px,12.13px 112.24px,8.96px 101.65px,6.37px 91.91px,4.28px 82.93px,2.62px 74.63px,1.4px 67.09px,0.65px 60.32px,0.31px 54.15px,0.32px 48.45px,0.7px 43.22px,1.45px 38.53px,2.55px 34.3px,3.94px 30.46px,5.66px 27.01px,7.72px 23.99px,10.04px 21.34px,12.57px 19.04px,15.32px 17.1px,18.32px 15.54px,21.5px 14.28px,24.8px 13.21px,28.25px 12.38px,31.86px 11.8px,35.58px 11.39px,39.36px 11.06px,43.23px 10.79px,47.2px 10.64px,51.22px 10.57px,55.23px 10.52px,59.23px 10.51px,63.23px 10.54px,67.27px 10.62px,71.35px 10.73px,75.48px 10.87px,79.64px 11.05px,83.86px 11.27px,88.17px 11.51px,92.57px 11.79px,97.05px 12.11px,101.62px 12.45px,106.29px 12.82px,111.05px 13.22px,115.91px 13.66px,120.88px 14.12px,125.97px 14.6px,147.61px 16.79px,171.6px 19.37px,198.12px 22.33px,227.49px 25.65px,259.76px 29.36px,294.96px 33.42px,332.93px 37.79px,373.09px 42.4px,414.35px 47.18px,454.34px 51.78px,493.27px 56.26px,528.53px 60.28px,586.23px 66.95px,627.16px 71.65px,657.12px 75.12px,688.57px 78.72px,702.7px 80.35px)">
<div style="left:0;top:0;width:676.4px;height:520.6px;clip-path:polygon(219.79px 114.5px,2488.56px 2079.06px,2937.5px 1388.97px,3181.94px 602.84px,3203.49px -220.14px,3000.52px -1017.99px,2588.32px -1730.63px,1997.93px -2304.38px,1273.81px -2696.05px,470.48px -2876.14px);background:conic-gradient(from 206.96deg at 196.82px 383.63px,rgb(0,255,0) 158.39deg,rgb(0,220,0) 160.55deg,rgb(0,192,0) 162.71deg,rgb(0,168,0) 164.87deg,rgb(0,148,0) 167.03deg,rgb(0,130,0) 169.2deg,rgb(0,115,0) 171.36deg,rgb(0,101,0) 173.52deg,rgb(0,89,0) 175.68deg,rgb(0,78,0) 177.84deg,rgb(0,68,0) 180deg,rgb(0,59,0) 182.16deg,rgb(0,51,0) 184.32deg,rgb(0,43,0) 186.48deg,rgb(0,36,0) 188.64deg,rgb(0,29,0) 190.8deg,rgb(0,22,0) 192.97deg,rgb(0,16,0) 195.13deg,rgb(0,11,0) 197.29deg,rgb(0,5,0) 199.45deg,rgb(0,0,0) 201.61deg),conic-gradient(from 293.05deg at 110.05px 18.42px,rgb(0,0,0) 162.72deg,rgb(0,0,9) 164.44deg,rgb(0,0,17) 166.17deg,rgb(0,0,26) 167.9deg,rgb(0,0,36) 169.63deg,rgb(0,0,45) 171.36deg,rgb(0,0,55) 173.09deg,rgb(0,0,65) 174.81deg,rgb(0,0,76) 176.54deg,rgb(0,0,87) 178.27deg,rgb(0,0,98) 180deg,rgb(0,0,110) 181.73deg,rgb(0,0,123) 183.46deg,rgb(0,0,136) 185.19deg,rgb(0,0,150) 186.91deg,rgb(0,0,165) 188.64deg,rgb(0,0,180) 190.37deg,rgb(0,0,197) 192.1deg,rgb(0,0,215) 193.83deg,rgb(0,0,234) 195.56deg,rgb(0,0,255) 197.28deg),rgb(255,0,0);background-blend-mode:screen,screen,normal"></div>
<div style="left:0;top:0;width:676.4px;height:520.6px;clip-path:polygon(223.92px 115.28px,-2740.95px 582.92px,-2770.15px -101.85px,-2643.16px -775.39px,-2366.62px -1402.52px,-1954.95px -1950.51px,-1429.65px -2390.77px,-818.13px -2700.31px,-152.32px -2862.98px,533.04px -2870.28px);background:conic-gradient(from 175.99deg at 196.82px 383.63px,rgb(0,0,0) 170.64deg,rgb(10,0,0) 171.58deg,rgb(21,0,0) 172.51deg,rgb(31,0,0) 173.45deg,rgb(42,0,0) 174.39deg,rgb(53,0,0) 175.32deg,rgb(64,0,0) 176.26deg,rgb(75,0,0) 177.19deg,rgb(87,0,0) 178.13deg,rgb(99,0,0) 179.06deg,rgb(111,0,0) 180deg,rgb(124,0,0) 180.94deg,rgb(137,0,0) 181.87deg,rgb(150,0,0) 182.81deg,rgb(164,0,0) 183.74deg,rgb(178,0,0) 184.68deg,rgb(192,0,0) 185.61deg,rgb(207,0,0) 186.55deg,rgb(223,0,0) 187.49deg,rgb(239,0,0) 188.42deg,rgb(255,0,0) 189.36deg),conic-gradient(from 88.68deg at 559.23px 63.77px,rgb(0,0,255) 172.92deg,rgb(0,0,238) 173.63deg,rgb(0,0,222) 174.33deg,rgb(0,0,206) 175.04deg,rgb(0,0,191) 175.75deg,rgb(0,0,176) 176.46deg,rgb(0,0,161) 177.17deg,rgb(0,0,148) 177.88deg,rgb(0,0,134) 178.58deg,rgb(0,0,121) 179.29deg,rgb(0,0,109) 180deg,rgb(0,0,96) 180.71deg,rgb(0,0,85) 181.42deg,rgb(0,0,73) 182.12deg,rgb(0,0,62) 182.83deg,rgb(0,0,51) 183.54deg,rgb(0,0,40) 184.25deg,rgb(0,0,30) 184.96deg,rgb(0,0,20) 185.67deg,rgb(0,0,10) 186.37deg,rgb(0,0,0) 187.08deg),rgb(0,255,0);background-blend-mode:screen,screen,normal"></div>
<div style="left:0;top:0;width:676.4px;height:520.6px;clip-path:polygon(222.8px 111.16px,-2750.13px 520.76px,-2510.82px 1350.94px,-2044.84px 2078.49px,-1390.85px 2643.06px,-603.07px 2997.84px,253.14px 3113.4px,1106.78px 2980.15px,1887.05px 2609.15px,2529.23px 2031.17px);background:conic-gradient(from 328.48deg at 110.05px 18.42px,rgb(255,0,0) 161.85deg,rgb(233,0,0) 163.66deg,rgb(213,0,0) 165.48deg,rgb(195,0,0) 167.29deg,rgb(178,0,0) 169.11deg,rgb(162,0,0) 170.92deg,rgb(147,0,0) 172.74deg,rgb(133,0,0) 174.55deg,rgb(120,0,0) 176.37deg,rgb(108,0,0) 178.18deg,rgb(96,0,0) 180deg,rgb(84,0,0) 181.82deg,rgb(74,0,0) 183.63deg,rgb(63,0,0) 185.45deg,rgb(53,0,0) 187.26deg,rgb(44,0,0) 189.08deg,rgb(34,0,0) 190.89deg,rgb(25,0,0) 192.71deg,rgb(17,0,0) 194.52deg,rgb(8,0,0) 196.34deg,rgb(0,0,0) 198.15deg),conic-gradient(from 65.08deg at 559.23px 63.77px,rgb(0,0,0) 163.48deg,rgb(0,5,0) 165.14deg,rgb(0,10,0) 166.79deg,rgb(0,15,0) 168.44deg,rgb(0,20,0) 170.09deg,rgb(0,26,0) 171.74deg,rgb(0,33,0) 173.39deg,rgb(0,39,0) 175.05deg,rgb(0,47,0) 176.7deg,rgb(0,55,0) 178.35deg,rgb(0,64,0) 180deg,rgb(0,74,0) 181.65deg,rgb(0,84,0) 183.3deg,rgb(0,97,0) 184.95deg,rgb(0,110,0) 186.61deg,rgb(0,126,0) 188.26deg,rgb(0,144,0) 189.91deg,rgb(0,165,0) 191.56deg,rgb(0,189,0) 193.21deg,rgb(0,219,0) 194.86deg,rgb(0,255,0) 196.52deg),rgb(0,0,255);background-blend-mode:screen,screen,normal"></div>
<svg style="left:0;top:0" width="676.4" height="520.6"><path d="M0 0H676.4V520.6H0ZM559.23 63.77L110.05 18.42L196.82 383.63Z" fill="#000" fill-opacity="0.4" fill-rule="evenodd"/></svg>
</div>
</div>
<div style="left:1229.2px;top:674.8px;width:1.4px;height:6.2px;background:#b4b4b4"></div>
<span class="t" style="left:1225.45px;top:684.76px;font-size:16px;line-height:16px;color:#e4e4e4;">0</span>
<div style="left:1285.66px;top:674.8px;width:1.4px;height:6.2px;background:#b4b4b4"></div>
<span class="t" style="left:1270.79px;top:684.76px;font-size:16px;line-height:16px;color:#e4e4e4;">0.05</span>
<div style="left:1342.13px;top:674.8px;width:1.4px;height:6.2px;background:#b4b4b4"></div>
<span class="t" style="left:1331.71px;top:684.76px;font-size:16px;line-height:16px;color:#e4e4e4;">0.1</span>
<div style="left:1398.6px;top:674.8px;width:1.4px;height:6.2px;background:#b4b4b4"></div>
<span class="t" style="left:1383.72px;top:684.76px;font-size:16px;line-height:16px;color:#e4e4e4;">0.15</span>
<div style="left:1455.06px;top:674.8px;width:1.4px;height:6.2px;background:#b4b4b4"></div>
<span class="t" style="left:1444.64px;top:684.76px;font-size:16px;line-height:16px;color:#e4e4e4;">0.2</span>
<div style="left:1511.53px;top:674.8px;width:1.4px;height:6.2px;background:#b4b4b4"></div>
<span class="t" style="left:1496.65px;top:684.76px;font-size:16px;line-height:16px;color:#e4e4e4;">0.25</span>
<div style="left:1567.99px;top:674.8px;width:1.4px;height:6.2px;background:#b4b4b4"></div>
<span class="t" style="left:1557.57px;top:684.76px;font-size:16px;line-height:16px;color:#e4e4e4;">0.3</span>
<div style="left:1624.46px;top:674.8px;width:1.4px;height:6.2px;background:#b4b4b4"></div>
<span class="t" style="left:1609.58px;top:684.76px;font-size:16px;line-height:16px;color:#e4e4e4;">0.35</span>
<div style="left:1680.92px;top:674.8px;width:1.4px;height:6.2px;background:#b4b4b4"></div>
<span class="t" style="left:1670.5px;top:684.76px;font-size:16px;line-height:16px;color:#e4e4e4;">0.4</span>
<div style="left:1737.38px;top:674.8px;width:1.4px;height:6.2px;background:#b4b4b4"></div>
<span class="t" style="left:1722.51px;top:684.76px;font-size:16px;line-height:16px;color:#e4e4e4;">0.45</span>
<div style="left:1793.85px;top:674.8px;width:1.4px;height:6.2px;background:#b4b4b4"></div>
<span class="t" style="left:1783.43px;top:684.76px;font-size:16px;line-height:16px;color:#e4e4e4;">0.5</span>
<div style="left:1850.32px;top:674.8px;width:1.4px;height:6.2px;background:#b4b4b4"></div>
<span class="t" style="left:1835.44px;top:684.76px;font-size:16px;line-height:16px;color:#e4e4e4;">0.55</span>
<div style="left:1223.8px;top:674.1px;width:6px;height:1.4px;background:#b4b4b4"></div>
<span class="t" style="left:1213.89px;top:666.86px;font-size:16px;line-height:16px;color:#e4e4e4;">0</span>
<div style="left:1223.8px;top:630.66px;width:6px;height:1.4px;background:#b4b4b4"></div>
<span class="t" style="left:1191.66px;top:623.42px;font-size:16px;line-height:16px;color:#e4e4e4;">0.05</span>
<div style="left:1223.8px;top:587.23px;width:6px;height:1.4px;background:#b4b4b4"></div>
<span class="t" style="left:1200.55px;top:579.99px;font-size:16px;line-height:16px;color:#e4e4e4;">0.1</span>
<div style="left:1223.8px;top:543.79px;width:6px;height:1.4px;background:#b4b4b4"></div>
<span class="t" style="left:1191.66px;top:536.55px;font-size:16px;line-height:16px;color:#e4e4e4;">0.15</span>
<div style="left:1223.8px;top:500.36px;width:6px;height:1.4px;background:#b4b4b4"></div>
<span class="t" style="left:1200.55px;top:493.12px;font-size:16px;line-height:16px;color:#e4e4e4;">0.2</span>
<div style="left:1223.8px;top:456.92px;width:6px;height:1.4px;background:#b4b4b4"></div>
<span class="t" style="left:1191.66px;top:449.68px;font-size:16px;line-height:16px;color:#e4e4e4;">0.25</span>
<div style="left:1223.8px;top:413.49px;width:6px;height:1.4px;background:#b4b4b4"></div>
<span class="t" style="left:1200.55px;top:406.25px;font-size:16px;line-height:16px;color:#e4e4e4;">0.3</span>
<div style="left:1223.8px;top:370.05px;width:6px;height:1.4px;background:#b4b4b4"></div>
<span class="t" style="left:1191.66px;top:362.81px;font-size:16px;line-height:16px;color:#e4e4e4;">0.35</span>
<div style="left:1223.8px;top:326.62px;width:6px;height:1.4px;background:#b4b4b4"></div>
<span class="t" style="left:1200.55px;top:319.38px;font-size:16px;line-height:16px;color:#e4e4e4;">0.4</span>
<div style="left:1223.8px;top:283.18px;width:6px;height:1.4px;background:#b4b4b4"></div>
<span class="t" style="left:1191.66px;top:275.94px;font-size:16px;line-height:16px;color:#e4e4e4;">0.45</span>
<div style="left:1223.8px;top:239.75px;width:6px;height:1.4px;background:#b4b4b4"></div>
<span class="t" style="left:1200.55px;top:232.51px;font-size:16px;line-height:16px;color:#e4e4e4;">0.5</span>
<div style="left:1223.8px;top:196.31px;width:6px;height:1.4px;background:#b4b4b4"></div>
<span class="t" style="left:1191.66px;top:189.07px;font-size:16px;line-height:16px;color:#e4e4e4;">0.55</span>
<svg style="left:1231.2px;top:153.4px" width="676.4" height="520.6" viewBox="1231.2 153.4 676.4 520.6">
<g fill="none" stroke="#fff" stroke-width="1.5"><rect x="1334.3" y="164.4" width="14" height="14"/><rect x="1454.3" y="176.3" width="14" height="14"/><rect x="1390.7" y="202.1" width="14" height="14"/><rect x="1429.8" y="191.9" width="14" height="14"/><rect x="1426.7" y="216.6" width="14" height="14"/><rect x="1481.7" y="190.6" width="14" height="14"/><rect x="1510.9" y="196.5" width="14" height="14"/><rect x="1398.0" y="254.4" width="14" height="14"/><rect x="1359.0" y="273.1" width="14" height="14"/><rect x="1376.2" y="309.1" width="14" height="14"/><rect x="1419.9" y="301.5" width="14" height="14"/><rect x="1441.2" y="306.1" width="14" height="14"/><rect x="1576.9" y="246.7" width="14" height="14"/><rect x="1549.7" y="298.9" width="14" height="14"/><rect x="1560.9" y="201.1" width="14" height="14"/><rect x="1567.4" y="203.1" width="14" height="14"/><rect x="1539.9" y="209.3" width="14" height="14"/><rect x="1525.4" y="211.7" width="14" height="14"/><rect x="1555.8" y="213.7" width="14" height="14"/><rect x="1504.5" y="218.6" width="14" height="14"/><rect x="1525.2" y="219.3" width="14" height="14"/><rect x="1531.2" y="223.0" width="14" height="14"/><rect x="1500.0" y="226.5" width="14" height="14"/><rect x="1514.2" y="226.5" width="14" height="14"/><rect x="1484.7" y="229.9" width="14" height="14"/><rect x="1504.5" y="233.8" width="14" height="14"/><rect x="1485.2" y="239.7" width="14" height="14"/><rect x="1654.7" y="230.8" width="14" height="14"/><rect x="1783.4" y="208.8" width="14" height="14"/><rect x="1479.0" y="329.0" width="14" height="14"/><rect x="1421.2" y="360.6" width="14" height="14"/><rect x="1590.0" y="381.1" width="14" height="14"/><rect x="1423.9" y="418.3" width="14" height="14"/><rect x="1421.2" y="529.6" width="14" height="14"/></g><rect x="1445.4" y="259.2" width="14" height="14" fill="none" stroke="#000" stroke-width="1.6"/><g stroke="#000" stroke-width="1"><circle cx="1456.5" cy="269.1" r="4.4" fill="#fff"/><circle cx="1454.0" cy="267.4" r="4.4" fill="#888"/><circle cx="1452.6" cy="269.6" r="4.4" fill="#aaa"/><circle cx="1465.5" cy="279.5" r="4.4" fill="#000"/><circle cx="1324.0" cy="168.5" r="4.4" fill="#00ff00"/><circle cx="1429.6" cy="191.8" r="4.4" fill="#a8b050"/><circle cx="1364.6" cy="200.4" r="4.4" fill="#6a9a58"/><circle cx="1425.6" cy="219.3" r="4.4" fill="#5f7048"/><circle cx="1506.0" cy="190.4" r="4.4" fill="#e0c040"/><circle cx="1554.8" cy="199.1" r="4.4" fill="#d8a040"/><circle cx="1610.0" cy="205.9" r="4.4" fill="#c8783a"/><circle cx="1608.3" cy="210.5" r="4.4" fill="#b06838"/><circle cx="1378.9" cy="261.4" r="4.4" fill="#80b8a8"/><circle cx="1351.2" cy="284.1" r="4.4" fill="#00ffff"/><circle cx="1361.6" cy="322.9" r="4.4" fill="#308098"/><circle cx="1416.5" cy="319.0" r="4.4" fill="#6078a0"/><circle cx="1448.2" cy="324.5" r="4.4" fill="#8080b0"/><circle cx="1589.7" cy="305.8" r="4.4" fill="#b85890"/><circle cx="1511.5" cy="232.3" r="4.4" fill="#f0c8a0"/><circle cx="1511.8" cy="245.2" r="4.4" fill="#e0b090"/><circle cx="1509.3" cy="242.5" r="4.4" fill="#f0c0a0"/><circle cx="1531.7" cy="238.2" r="4.4" fill="#704838"/><circle cx="1531.4" cy="230.6" r="4.4" fill="#a87050"/><circle cx="1541.7" cy="220.7" r="4.4" fill="#b08058"/><circle cx="1550.1" cy="229.2" r="4.4" fill="#c09068"/><circle cx="1540.4" cy="231.9" r="4.4" fill="#d0a080"/><circle cx="1546.3" cy="228.0" r="4.4" fill="#d8a880"/><circle cx="1539.5" cy="227.5" r="4.4" fill="#c89870"/><circle cx="1554.8" cy="231.1" r="4.4" fill="#c89070"/><circle cx="1562.0" cy="217.5" r="4.4" fill="#805838"/><circle cx="1563.5" cy="222.1" r="4.4" fill="#c08860"/><circle cx="1572.2" cy="222.9" r="4.4" fill="#d09870"/><circle cx="1575.1" cy="228.0" r="4.4" fill="#e0a080"/><circle cx="1576.8" cy="219.0" r="4.4" fill="#7a5030"/><circle cx="1585.5" cy="226.3" r="4.4" fill="#6a4028"/><circle cx="1635.9" cy="252.0" r="4.4" fill="#b87070"/><circle cx="1706.4" cy="239.3" r="4.4" fill="#b05050"/><circle cx="1788.9" cy="215.8" r="4.4" fill="#ff0000"/><circle cx="1479.8" cy="351.8" r="4.4" fill="#604870"/><circle cx="1419.3" cy="385.4" r="4.4" fill="#5060a0"/><circle cx="1607.0" cy="385.4" r="4.4" fill="#ff00ff"/><circle cx="1420.8" cy="444.5" r="4.4" fill="#404090"/><circle cx="1416.2" cy="558.6" r="4.4" fill="#0000ff"/><circle cx="1466.9" cy="184.2" r="4.4" fill="#ffff00"/></g>
</svg>
<div style="left:1691px;top:491.3px;width:211.2px;height:139px;background:linear-gradient(to bottom right,rgb(0,178,0),rgb(0,94,0) 50%,rgb(0,46,0)),linear-gradient(to bottom left,rgb(0,0,14),rgb(0,0,40) 50%,rgb(0,0,82)),#f00;background-blend-mode:screen,screen,normal;border:2px solid #8a8a8a;box-sizing:border-box"></div>
<svg style="left:1691.4px;top:491.7px" width="210.4" height="138.3" viewBox="1691.4 491.7 210.4 138.3">
<g fill="none" stroke="#fff" stroke-width="1.4"><rect x="1742.8" y="536.4" width="13.6" height="13.6"/><rect x="1820.6" y="526.0" width="13.6" height="13.6"/><rect x="1861.4" y="527.5" width="13.6" height="13.6"/><rect x="1884.2" y="550.6" width="13.6" height="13.6"/><rect x="1789.0" y="553.0" width="13.6" height="13.6"/><rect x="1797.5" y="562.2" width="13.6" height="13.6"/><rect x="1691.5" y="565.3" width="13.6" height="13.6"/><rect x="1698.8" y="563.4" width="13.6" height="13.6"/><rect x="1707.7" y="569.9" width="13.6" height="13.6"/><rect x="1725.0" y="564.5" width="13.6" height="13.6"/><rect x="1738.9" y="564.5" width="13.6" height="13.6"/><rect x="1745.5" y="574.9" width="13.6" height="13.6"/><rect x="1779.8" y="576.1" width="13.6" height="13.6"/><rect x="1684.2" y="590.3" width="13.6" height="13.6"/></g><g stroke="#000" stroke-width="1"><circle cx="1719.1" cy="572.1" r="4.2" fill="#e8c098"/><circle cx="1750.7" cy="601.0" r="4.2" fill="#705040"/><circle cx="1770.0" cy="583.3" r="4.2" fill="#c89070"/><circle cx="1781.2" cy="574.8" r="4.2" fill="#b07850"/><circle cx="1795.8" cy="583.3" r="4.2" fill="#d8a078"/><circle cx="1805.8" cy="573.2" r="4.2" fill="#c08860"/><circle cx="1820.5" cy="576.3" r="4.2" fill="#e0a880"/><circle cx="1826.6" cy="580.6" r="4.2" fill="#c08058"/><circle cx="1836.3" cy="587.9" r="4.2" fill="#d09068"/><circle cx="1837.8" cy="548.6" r="4.2" fill="#c08050"/><circle cx="1887.5" cy="566.3" r="4.2" fill="#c89068"/><circle cx="1889.4" cy="592.1" r="4.2" fill="#e8a078"/><circle cx="1902.9" cy="548.6" r="4.2" fill="#a06840"/><circle cx="1902.9" cy="574.8" r="4.2" fill="#b07850"/></g>
</svg>
<div style="left:1637.4px;top:640px;width:267.1px;height:28.6px;background:#2e2e2e"></div>
<span class="t" style="left:1638px;top:644.75px;font-size:21.8px;line-height:21.8px;color:#fff;transform:scaleX(0.9609);">RGB Triplet: 207, 143, 102</span>
<div style="left:491px;top:727.9px;width:1427px;height:240px;overflow:hidden">
<div style="left:0px;top:0px;width:1427px;height:26.5px;background:linear-gradient(#2e2e2e 0%,#252525 47%,#141414 53%,#1d1d1d 100%)"></div>
<div style="left:0px;top:0px;width:9.8px;height:26.5px;background:#000"></div>
<span class="t" style="left:95.2px;top:7.31px;font-size:14.4px;line-height:14.4px;color:#fff;transform:scaleX(0.7990);">White</span>
<span class="t" style="left:137.2px;top:7.31px;font-size:14.4px;line-height:14.4px;color:#fff;transform:scaleX(0.7285);">Gray 80</span>
<span class="t" style="left:181px;top:7.31px;font-size:14.4px;line-height:14.4px;color:#fff;transform:scaleX(0.7187);">Gray 65</span>
<span class="t" style="left:225px;top:7.31px;font-size:14.4px;line-height:14.4px;color:#fff;transform:scaleX(0.7304);">Gray 50</span>
<span class="t" style="left:268.7px;top:7.31px;font-size:14.4px;line-height:14.4px;color:#fff;transform:scaleX(0.7304);">Gray 35</span>
<span class="t" style="left:312.4px;top:7.31px;font-size:14.4px;line-height:14.4px;color:#fff;transform:scaleX(0.7272);">Black</span>
<span class="t" style="left:344.5px;top:7.31px;font-size:14.4px;line-height:14.4px;color:#fff;transform:scaleX(0.7325);">Dark Skin</span>
<span class="t" style="left:396.6px;top:7.31px;font-size:14.4px;line-height:14.4px;color:#fff;transform:scaleX(0.7421);">Light Skin</span>
<span class="t" style="left:449.4px;top:7.31px;font-size:14.4px;line-height:14.4px;color:#fff;transform:scaleX(0.7201);">Blue Sky</span>
<span class="t" style="left:496.3px;top:7.31px;font-size:14.4px;line-height:14.4px;color:#fff;transform:scaleX(0.7394);">Foliage</span>
<span class="t" style="left:537.2px;top:7.31px;font-size:14.4px;line-height:14.4px;color:#fff;transform:scaleX(0.7646);">Blue Flower</span>
<span class="t" style="left:601.7px;top:7.31px;font-size:14.4px;line-height:14.4px;color:#fff;transform:scaleX(0.7476);">Bluish Green</span>
<span class="t" style="left:670px;top:7.31px;font-size:14.4px;line-height:14.4px;color:#fff;transform:scaleX(0.7417);">Orange</span>
<span class="t" style="left:712.6px;top:7.31px;font-size:14.4px;line-height:14.4px;color:#fff;transform:scaleX(0.7595);">Purplish Blue</span>
<span class="t" style="left:783.1px;top:7.31px;font-size:14.4px;line-height:14.4px;color:#fff;transform:scaleX(0.7730);">Moderate Red</span>
<span class="t" style="left:859.5px;top:7.31px;font-size:14.4px;line-height:14.4px;color:#fff;transform:scaleX(0.7618);">Purple</span>
<span class="t" style="left:897.6px;top:7.31px;font-size:14.4px;line-height:14.4px;color:#fff;transform:scaleX(0.7593);">Yellow Green</span>
<span class="t" style="left:968.1px;top:7.31px;font-size:14.4px;line-height:14.4px;color:#fff;transform:scaleX(0.7542);">Orange Yellow</span>
<span class="t" style="left:1044.2px;top:7.31px;font-size:14.4px;line-height:14.4px;color:#fff;transform:scaleX(0.7497);">Blue</span>
<span class="t" style="left:1080.1px;top:7.31px;font-size:14.4px;line-height:14.4px;color:#fff;transform:scaleX(0.7500);">Green</span>
<span class="t" style="left:1116.5px;top:7.31px;font-size:14.4px;line-height:14.4px;color:#fff;transform:scaleX(0.7157);">Red</span>
<span class="t" style="left:1152.6px;top:7.31px;font-size:14.4px;line-height:14.4px;color:#fff;transform:scaleX(0.7595);">Yellow</span>
<span class="t" style="left:1194.8px;top:7.31px;font-size:14.4px;line-height:14.4px;color:#fff;transform:scaleX(0.7766);">Magenta</span>
<span class="t" style="left:1244.5px;top:7.31px;font-size:14.4px;line-height:14.4px;color:#fff;transform:scaleX(0.7200);">Cyan</span>
<span class="t" style="left:1280.4px;top:7.31px;font-size:14.4px;line-height:14.4px;color:#fff;transform:scaleX(0.7260);">100% Red</span>
<span class="t" style="left:1335.1px;top:7.31px;font-size:14.4px;line-height:14.4px;color:#fff;transform:scaleX(0.7425);">100% Green</span>
<span class="t" style="left:1401.2px;top:7.31px;font-size:14.4px;line-height:14.4px;color:#fff;transform:scaleX(0.7255);">100% Blue</span>
<div style="left:9.8px;top:26.5px;width:1417.2px;height:24.6px;background:#444444"></div>
<div style="left:0px;top:26.5px;width:9.8px;height:24.6px;background:linear-gradient(#1c1c1c,#2a2a2a)"></div>
<span class="t" style="left:13px;top:31.91px;font-size:14.4px;line-height:14.4px;color:#fff;transform:scaleX(0.7355);">x: CIE31</span>
<span class="t" style="left:95.2px;top:31.91px;font-size:14.4px;line-height:14.4px;color:#fff;transform:scaleX(0.7900);">0.31</span>
<span class="t" style="left:137.2px;top:31.91px;font-size:14.4px;line-height:14.4px;color:#fff;transform:scaleX(0.7900);">0.31</span>
<span class="t" style="left:181px;top:31.91px;font-size:14.4px;line-height:14.4px;color:#fff;transform:scaleX(0.7900);">0.31</span>
<span class="t" style="left:225px;top:31.91px;font-size:14.4px;line-height:14.4px;color:#fff;transform:scaleX(0.7900);">0.31</span>
<span class="t" style="left:268.7px;top:31.91px;font-size:14.4px;line-height:14.4px;color:#fff;transform:scaleX(0.7900);">0.31</span>
<span class="t" style="left:312.4px;top:31.91px;font-size:14.4px;line-height:14.4px;color:#fff;transform:scaleX(0.7900);">0.31</span>
<span class="t" style="left:344.5px;top:31.91px;font-size:14.4px;line-height:14.4px;color:#fff;transform:scaleX(0.7900);">0.43</span>
<span class="t" style="left:396.6px;top:31.91px;font-size:14.4px;line-height:14.4px;color:#fff;transform:scaleX(0.7900);">0.40</span>
<span class="t" style="left:449.4px;top:31.91px;font-size:14.4px;line-height:14.4px;color:#fff;transform:scaleX(0.7900);">0.23</span>
<span class="t" style="left:496.3px;top:31.91px;font-size:14.4px;line-height:14.4px;color:#fff;transform:scaleX(0.7900);">0.33</span>
<span class="t" style="left:537.2px;top:31.91px;font-size:14.4px;line-height:14.4px;color:#fff;transform:scaleX(0.7900);">0.26</span>
<span class="t" style="left:601.7px;top:31.91px;font-size:14.4px;line-height:14.4px;color:#fff;transform:scaleX(0.7900);">0.23</span>
<span class="t" style="left:670px;top:31.91px;font-size:14.4px;line-height:14.4px;color:#fff;transform:scaleX(0.7900);">0.56</span>
<span class="t" style="left:712.6px;top:31.91px;font-size:14.4px;line-height:14.4px;color:#fff;transform:scaleX(0.7900);">0.20</span>
<span class="t" style="left:783.1px;top:31.91px;font-size:14.4px;line-height:14.4px;color:#fff;transform:scaleX(0.7900);">0.51</span>
<span class="t" style="left:859.5px;top:31.91px;font-size:14.4px;line-height:14.4px;color:#fff;transform:scaleX(0.7900);">0.27</span>
<span class="t" style="left:897.6px;top:31.91px;font-size:14.4px;line-height:14.4px;color:#fff;transform:scaleX(0.7900);">0.38</span>
<span class="t" style="left:968.1px;top:31.91px;font-size:14.4px;line-height:14.4px;color:#fff;transform:scaleX(0.7900);">0.52</span>
<span class="t" style="left:1044.2px;top:31.91px;font-size:14.4px;line-height:14.4px;color:#fff;transform:scaleX(0.7900);">0.17</span>
<span class="t" style="left:1080.1px;top:31.91px;font-size:14.4px;line-height:14.4px;color:#fff;transform:scaleX(0.7900);">0.27</span>
<span class="t" style="left:1116.5px;top:31.91px;font-size:14.4px;line-height:14.4px;color:#fff;transform:scaleX(0.7900);">0.58</span>
<span class="t" style="left:1152.6px;top:31.91px;font-size:14.4px;line-height:14.4px;color:#fff;transform:scaleX(0.7900);">0.48</span>
<span class="t" style="left:1194.8px;top:31.91px;font-size:14.4px;line-height:14.4px;color:#fff;transform:scaleX(0.7900);">0.40</span>
<span class="t" style="left:1244.5px;top:31.91px;font-size:14.4px;line-height:14.4px;color:#fff;transform:scaleX(0.7900);">0.17</span>
<span class="t" style="left:1280.4px;top:31.91px;font-size:14.4px;line-height:14.4px;color:#fff;transform:scaleX(0.7900);">0.68</span>
<span class="t" style="left:1335.1px;top:31.91px;font-size:14.4px;line-height:14.4px;color:#fff;transform:scaleX(0.7900);">0.23</span>
<span class="t" style="left:1401.2px;top:31.91px;font-size:14.4px;line-height:14.4px;color:#fff;transform:scaleX(0.7900);">0.14</span>
<div style="left:9.8px;top:51.1px;width:1417.2px;height:25px;background:#7f7f7f"></div>
<div style="left:0px;top:51.1px;width:9.8px;height:25px;background:linear-gradient(#2a2a2a,#3a3a3a)"></div>
<span class="t" style="left:13px;top:56.71px;font-size:14.4px;line-height:14.4px;color:#fff;transform:scaleX(0.7355);">y: CIE31</span>
<span class="t" style="left:95.2px;top:56.71px;font-size:14.4px;line-height:14.4px;color:#fff;transform:scaleX(0.7900);">0.32</span>
<span class="t" style="left:137.2px;top:56.71px;font-size:14.4px;line-height:14.4px;color:#fff;transform:scaleX(0.7900);">0.32</span>
<span class="t" style="left:181px;top:56.71px;font-size:14.4px;line-height:14.4px;color:#fff;transform:scaleX(0.7900);">0.32</span>
<span class="t" style="left:225px;top:56.71px;font-size:14.4px;line-height:14.4px;color:#fff;transform:scaleX(0.7900);">0.33</span>
<span class="t" style="left:268.7px;top:56.71px;font-size:14.4px;line-height:14.4px;color:#fff;transform:scaleX(0.7900);">0.32</span>
<span class="t" style="left:312.4px;top:56.71px;font-size:14.4px;line-height:14.4px;color:#fff;transform:scaleX(0.7900);">0.30</span>
<span class="t" style="left:344.5px;top:56.71px;font-size:14.4px;line-height:14.4px;color:#fff;transform:scaleX(0.7900);">0.36</span>
<span class="t" style="left:396.6px;top:56.71px;font-size:14.4px;line-height:14.4px;color:#fff;transform:scaleX(0.7900);">0.35</span>
<span class="t" style="left:449.4px;top:56.71px;font-size:14.4px;line-height:14.4px;color:#fff;transform:scaleX(0.7900);">0.25</span>
<span class="t" style="left:496.3px;top:56.71px;font-size:14.4px;line-height:14.4px;color:#fff;transform:scaleX(0.7900);">0.45</span>
<span class="t" style="left:537.2px;top:56.71px;font-size:14.4px;line-height:14.4px;color:#fff;transform:scaleX(0.7900);">0.24</span>
<span class="t" style="left:601.7px;top:56.71px;font-size:14.4px;line-height:14.4px;color:#fff;transform:scaleX(0.7900);">0.37</span>
<span class="t" style="left:670px;top:56.71px;font-size:14.4px;line-height:14.4px;color:#fff;transform:scaleX(0.7900);">0.40</span>
<span class="t" style="left:712.6px;top:56.71px;font-size:14.4px;line-height:14.4px;color:#fff;transform:scaleX(0.7900);">0.17</span>
<span class="t" style="left:783.1px;top:56.71px;font-size:14.4px;line-height:14.4px;color:#fff;transform:scaleX(0.7900);">0.30</span>
<span class="t" style="left:859.5px;top:56.71px;font-size:14.4px;line-height:14.4px;color:#fff;transform:scaleX(0.7900);">0.20</span>
<span class="t" style="left:897.6px;top:56.71px;font-size:14.4px;line-height:14.4px;color:#fff;transform:scaleX(0.7900);">0.53</span>
<span class="t" style="left:968.1px;top:56.71px;font-size:14.4px;line-height:14.4px;color:#fff;transform:scaleX(0.7900);">0.44</span>
<span class="t" style="left:1044.2px;top:56.71px;font-size:14.4px;line-height:14.4px;color:#fff;transform:scaleX(0.7900);">0.12</span>
<span class="t" style="left:1080.1px;top:56.71px;font-size:14.4px;line-height:14.4px;color:#fff;transform:scaleX(0.7900);">0.54</span>
<span class="t" style="left:1116.5px;top:56.71px;font-size:14.4px;line-height:14.4px;color:#fff;transform:scaleX(0.7900);">0.31</span>
<span class="t" style="left:1152.6px;top:56.71px;font-size:14.4px;line-height:14.4px;color:#fff;transform:scaleX(0.7900);">0.49</span>
<span class="t" style="left:1194.8px;top:56.71px;font-size:14.4px;line-height:14.4px;color:#fff;transform:scaleX(0.7900);">0.24</span>
<span class="t" style="left:1244.5px;top:56.71px;font-size:14.4px;line-height:14.4px;color:#fff;transform:scaleX(0.7900);">0.26</span>
<span class="t" style="left:1280.4px;top:56.71px;font-size:14.4px;line-height:14.4px;color:#fff;transform:scaleX(0.7900);">0.32</span>
<span class="t" style="left:1335.1px;top:56.71px;font-size:14.4px;line-height:14.4px;color:#fff;transform:scaleX(0.7900);">0.72</span>
<span class="t" style="left:1401.2px;top:56.71px;font-size:14.4px;line-height:14.4px;color:#fff;transform:scaleX(0.7900);">0.05</span>
<div style="left:9.8px;top:76.1px;width:1417.2px;height:24.9px;background:#444444"></div>
<div style="left:0px;top:76.1px;width:9.8px;height:24.9px;background:linear-gradient(#1c1c1c,#2a2a2a)"></div>
<span class="t" style="left:13px;top:81.66px;font-size:14.4px;line-height:14.4px;color:#fff;transform:scaleX(0.7900);">Y</span>
<span class="t" style="left:95.2px;top:81.66px;font-size:14.4px;line-height:14.4px;color:#fff;transform:scaleX(0.7900);">322.65</span>
<span class="t" style="left:137.2px;top:81.66px;font-size:14.4px;line-height:14.4px;color:#fff;transform:scaleX(0.7900);">259.21</span>
<span class="t" style="left:181px;top:81.66px;font-size:14.4px;line-height:14.4px;color:#fff;transform:scaleX(0.7900);">211.32</span>
<span class="t" style="left:225px;top:81.66px;font-size:14.4px;line-height:14.4px;color:#fff;transform:scaleX(0.7900);">162.32</span>
<span class="t" style="left:268.7px;top:81.66px;font-size:14.4px;line-height:14.4px;color:#fff;transform:scaleX(0.7900);">112.98</span>
<span class="t" style="left:312.4px;top:81.66px;font-size:14.4px;line-height:14.4px;color:#fff;transform:scaleX(0.7900);">0.04</span>
<span class="t" style="left:344.5px;top:81.66px;font-size:14.4px;line-height:14.4px;color:#fff;transform:scaleX(0.7900);">35.50</span>
<span class="t" style="left:396.6px;top:81.66px;font-size:14.4px;line-height:14.4px;color:#fff;transform:scaleX(0.7900);">119.72</span>
<span class="t" style="left:449.4px;top:81.66px;font-size:14.4px;line-height:14.4px;color:#fff;transform:scaleX(0.7900);">59.72</span>
<span class="t" style="left:496.3px;top:81.66px;font-size:14.4px;line-height:14.4px;color:#fff;transform:scaleX(0.7900);">44.16</span>
<span class="t" style="left:537.2px;top:81.66px;font-size:14.4px;line-height:14.4px;color:#fff;transform:scaleX(0.7900);">75.83</span>
<span class="t" style="left:601.7px;top:81.66px;font-size:14.4px;line-height:14.4px;color:#fff;transform:scaleX(0.7900);">131.95</span>
<span class="t" style="left:670px;top:81.66px;font-size:14.4px;line-height:14.4px;color:#fff;transform:scaleX(0.7900);">102.42</span>
<span class="t" style="left:712.6px;top:81.66px;font-size:14.4px;line-height:14.4px;color:#fff;transform:scaleX(0.7900);">36.20</span>
<span class="t" style="left:783.1px;top:81.66px;font-size:14.4px;line-height:14.4px;color:#fff;transform:scaleX(0.7900);">68.17</span>
<span class="t" style="left:859.5px;top:81.66px;font-size:14.4px;line-height:14.4px;color:#fff;transform:scaleX(0.7900);">20.76</span>
<span class="t" style="left:897.6px;top:81.66px;font-size:14.4px;line-height:14.4px;color:#fff;transform:scaleX(0.7900);">139.20</span>
<span class="t" style="left:968.1px;top:81.66px;font-size:14.4px;line-height:14.4px;color:#fff;transform:scaleX(0.7900);">146.04</span>
<span class="t" style="left:1044.2px;top:81.66px;font-size:14.4px;line-height:14.4px;color:#fff;transform:scaleX(0.7900);">19.12</span>
<span class="t" style="left:1080.1px;top:81.66px;font-size:14.4px;line-height:14.4px;color:#fff;transform:scaleX(0.7900);">73.85</span>
<span class="t" style="left:1116.5px;top:81.66px;font-size:14.4px;line-height:14.4px;color:#fff;transform:scaleX(0.7900);">44.36</span>
<span class="t" style="left:1152.6px;top:81.66px;font-size:14.4px;line-height:14.4px;color:#fff;transform:scaleX(0.7900);">199.64</span>
<span class="t" style="left:1194.8px;top:81.66px;font-size:14.4px;line-height:14.4px;color:#fff;transform:scaleX(0.7900);">66.48</span>
<span class="t" style="left:1244.5px;top:81.66px;font-size:14.4px;line-height:14.4px;color:#fff;transform:scaleX(0.7900);">63.78</span>
<span class="t" style="left:1280.4px;top:81.66px;font-size:14.4px;line-height:14.4px;color:#fff;transform:scaleX(0.7900);">92.59</span>
<span class="t" style="left:1335.1px;top:81.66px;font-size:14.4px;line-height:14.4px;color:#fff;transform:scaleX(0.7900);">220.16</span>
<span class="t" style="left:1401.2px;top:81.66px;font-size:14.4px;line-height:14.4px;color:#fff;transform:scaleX(0.7900);">21.76</span>
<div style="left:9.8px;top:101px;width:1417.2px;height:24.5px;background:#7f7f7f"></div>
<div style="left:0px;top:101px;width:9.8px;height:24.5px;background:linear-gradient(#2a2a2a,#3a3a3a)"></div>
<span class="t" style="left:13px;top:106.36px;font-size:14.4px;line-height:14.4px;color:#fff;transform:scaleX(0.7900);">Target x:CIE31</span>
<span class="t" style="left:95.2px;top:106.36px;font-size:14.4px;line-height:14.4px;color:#fff;transform:scaleX(0.7900);">0.31</span>
<span class="t" style="left:137.2px;top:106.36px;font-size:14.4px;line-height:14.4px;color:#fff;transform:scaleX(0.7900);">0.31</span>
<span class="t" style="left:181px;top:106.36px;font-size:14.4px;line-height:14.4px;color:#fff;transform:scaleX(0.7900);">0.31</span>
<span class="t" style="left:225px;top:106.36px;font-size:14.4px;line-height:14.4px;color:#fff;transform:scaleX(0.7900);">0.31</span>
<span class="t" style="left:268.7px;top:106.36px;font-size:14.4px;line-height:14.4px;color:#fff;transform:scaleX(0.7900);">0.31</span>
<span class="t" style="left:312.4px;top:106.36px;font-size:14.4px;line-height:14.4px;color:#fff;transform:scaleX(0.7900);">0.31</span>
<span class="t" style="left:344.5px;top:106.36px;font-size:14.4px;line-height:14.4px;color:#fff;transform:scaleX(0.7900);">0.41</span>
<span class="t" style="left:396.6px;top:106.36px;font-size:14.4px;line-height:14.4px;color:#fff;transform:scaleX(0.7900);">0.38</span>
<span class="t" style="left:449.4px;top:106.36px;font-size:14.4px;line-height:14.4px;color:#fff;transform:scaleX(0.7900);">0.25</span>
<span class="t" style="left:496.3px;top:106.36px;font-size:14.4px;line-height:14.4px;color:#fff;transform:scaleX(0.7900);">0.34</span>
<span class="t" style="left:537.2px;top:106.36px;font-size:14.4px;line-height:14.4px;color:#fff;transform:scaleX(0.7900);">0.27</span>
<span class="t" style="left:601.7px;top:106.36px;font-size:14.4px;line-height:14.4px;color:#fff;transform:scaleX(0.7900);">0.26</span>
<span class="t" style="left:670px;top:106.36px;font-size:14.4px;line-height:14.4px;color:#fff;transform:scaleX(0.7900);">0.51</span>
<span class="t" style="left:712.6px;top:106.36px;font-size:14.4px;line-height:14.4px;color:#fff;transform:scaleX(0.7900);">0.21</span>
<div style="left:780.1px;top:101.4px;width:74.9px;height:22.9px;background:#efefef;border:1px solid #fff;box-sizing:border-box"></div>
<span class="t" style="left:783.1px;top:106.36px;font-size:14.4px;line-height:14.4px;color:#111;transform:scaleX(0.7900);">0.46</span>
<span class="t" style="left:859.5px;top:106.36px;font-size:14.4px;line-height:14.4px;color:#fff;transform:scaleX(0.7900);">0.29</span>
<span class="t" style="left:897.6px;top:106.36px;font-size:14.4px;line-height:14.4px;color:#fff;transform:scaleX(0.7900);">0.38</span>
<span class="t" style="left:968.1px;top:106.36px;font-size:14.4px;line-height:14.4px;color:#fff;transform:scaleX(0.7900);">0.47</span>
<span class="t" style="left:1044.2px;top:106.36px;font-size:14.4px;line-height:14.4px;color:#fff;transform:scaleX(0.7900);">0.19</span>
<span class="t" style="left:1080.1px;top:106.36px;font-size:14.4px;line-height:14.4px;color:#fff;transform:scaleX(0.7900);">0.31</span>
<span class="t" style="left:1116.5px;top:106.36px;font-size:14.4px;line-height:14.4px;color:#fff;transform:scaleX(0.7900);">0.55</span>
<span class="t" style="left:1152.6px;top:106.36px;font-size:14.4px;line-height:14.4px;color:#fff;transform:scaleX(0.7900);">0.45</span>
<span class="t" style="left:1194.8px;top:106.36px;font-size:14.4px;line-height:14.4px;color:#fff;transform:scaleX(0.7900);">0.37</span>
<span class="t" style="left:1244.5px;top:106.36px;font-size:14.4px;line-height:14.4px;color:#fff;transform:scaleX(0.7900);">0.20</span>
<span class="t" style="left:1280.4px;top:106.36px;font-size:14.4px;line-height:14.4px;color:#fff;transform:scaleX(0.7900);">0.68</span>
<span class="t" style="left:1335.1px;top:106.36px;font-size:14.4px;line-height:14.4px;color:#fff;transform:scaleX(0.7900);">0.27</span>
<span class="t" style="left:1401.2px;top:106.36px;font-size:14.4px;line-height:14.4px;color:#fff;transform:scaleX(0.7900);">0.15</span>
<div style="left:9.8px;top:125.5px;width:1417.2px;height:24.6px;background:#444444"></div>
<div style="left:0px;top:125.5px;width:9.8px;height:24.6px;background:linear-gradient(#1c1c1c,#2a2a2a)"></div>
<span class="t" style="left:13px;top:130.91px;font-size:14.4px;line-height:14.4px;color:#fff;transform:scaleX(0.7900);">Target y:CIE31</span>
<span class="t" style="left:95.2px;top:130.91px;font-size:14.4px;line-height:14.4px;color:#fff;transform:scaleX(0.7900);">0.33</span>
<span class="t" style="left:137.2px;top:130.91px;font-size:14.4px;line-height:14.4px;color:#fff;transform:scaleX(0.7900);">0.33</span>
<span class="t" style="left:181px;top:130.91px;font-size:14.4px;line-height:14.4px;color:#fff;transform:scaleX(0.7900);">0.33</span>
<span class="t" style="left:225px;top:130.91px;font-size:14.4px;line-height:14.4px;color:#fff;transform:scaleX(0.7900);">0.33</span>
<span class="t" style="left:268.7px;top:130.91px;font-size:14.4px;line-height:14.4px;color:#fff;transform:scaleX(0.7900);">0.33</span>
<span class="t" style="left:312.4px;top:130.91px;font-size:14.4px;line-height:14.4px;color:#fff;transform:scaleX(0.7900);">0.33</span>
<span class="t" style="left:344.5px;top:130.91px;font-size:14.4px;line-height:14.4px;color:#fff;transform:scaleX(0.7900);">0.36</span>
<span class="t" style="left:396.6px;top:130.91px;font-size:14.4px;line-height:14.4px;color:#fff;transform:scaleX(0.7900);">0.35</span>
<span class="t" style="left:449.4px;top:130.91px;font-size:14.4px;line-height:14.4px;color:#fff;transform:scaleX(0.7900);">0.27</span>
<span class="t" style="left:496.3px;top:130.91px;font-size:14.4px;line-height:14.4px;color:#fff;transform:scaleX(0.7900);">0.43</span>
<span class="t" style="left:537.2px;top:130.91px;font-size:14.4px;line-height:14.4px;color:#fff;transform:scaleX(0.7900);">0.25</span>
<span class="t" style="left:601.7px;top:130.91px;font-size:14.4px;line-height:14.4px;color:#fff;transform:scaleX(0.7900);">0.36</span>
<span class="t" style="left:670px;top:130.91px;font-size:14.4px;line-height:14.4px;color:#fff;transform:scaleX(0.7900);">0.41</span>
<span class="t" style="left:712.6px;top:130.91px;font-size:14.4px;line-height:14.4px;color:#fff;transform:scaleX(0.7900);">0.19</span>
<span class="t" style="left:783.1px;top:130.91px;font-size:14.4px;line-height:14.4px;color:#fff;transform:scaleX(0.7900);">0.31</span>
<span class="t" style="left:859.5px;top:130.91px;font-size:14.4px;line-height:14.4px;color:#fff;transform:scaleX(0.7900);">0.22</span>
<span class="t" style="left:897.6px;top:130.91px;font-size:14.4px;line-height:14.4px;color:#fff;transform:scaleX(0.7900);">0.50</span>
<span class="t" style="left:968.1px;top:130.91px;font-size:14.4px;line-height:14.4px;color:#fff;transform:scaleX(0.7900);">0.45</span>
<span class="t" style="left:1044.2px;top:130.91px;font-size:14.4px;line-height:14.4px;color:#fff;transform:scaleX(0.7900);">0.13</span>
<span class="t" style="left:1080.1px;top:130.91px;font-size:14.4px;line-height:14.4px;color:#fff;transform:scaleX(0.7900);">0.49</span>
<span class="t" style="left:1116.5px;top:130.91px;font-size:14.4px;line-height:14.4px;color:#fff;transform:scaleX(0.7900);">0.32</span>
<span class="t" style="left:1152.6px;top:130.91px;font-size:14.4px;line-height:14.4px;color:#fff;transform:scaleX(0.7900);">0.48</span>
<span class="t" style="left:1194.8px;top:130.91px;font-size:14.4px;line-height:14.4px;color:#fff;transform:scaleX(0.7900);">0.24</span>
<span class="t" style="left:1244.5px;top:130.91px;font-size:14.4px;line-height:14.4px;color:#fff;transform:scaleX(0.7900);">0.26</span>
<span class="t" style="left:1280.4px;top:130.91px;font-size:14.4px;line-height:14.4px;color:#fff;transform:scaleX(0.7900);">0.32</span>
<span class="t" style="left:1335.1px;top:130.91px;font-size:14.4px;line-height:14.4px;color:#fff;transform:scaleX(0.7900);">0.69</span>
<span class="t" style="left:1401.2px;top:130.91px;font-size:14.4px;line-height:14.4px;color:#fff;transform:scaleX(0.7900);">0.06</span>
<div style="left:9.8px;top:150.1px;width:1417.2px;height:24.6px;background:#7f7f7f"></div>
<div style="left:0px;top:150.1px;width:9.8px;height:24.6px;background:linear-gradient(#2a2a2a,#3a3a3a)"></div>
<span class="t" style="left:13px;top:155.51px;font-size:14.4px;line-height:14.4px;color:#fff;transform:scaleX(0.7900);">Target Y</span>
<span class="t" style="left:95.2px;top:155.51px;font-size:14.4px;line-height:14.4px;color:#fff;transform:scaleX(0.7900);">322.65</span>
<span class="t" style="left:137.2px;top:155.51px;font-size:14.4px;line-height:14.4px;color:#fff;transform:scaleX(0.7900);">257.14</span>
<span class="t" style="left:181px;top:155.51px;font-size:14.4px;line-height:14.4px;color:#fff;transform:scaleX(0.7900);">208.30</span>
<span class="t" style="left:225px;top:155.51px;font-size:14.4px;line-height:14.4px;color:#fff;transform:scaleX(0.7900);">161.19</span>
<span class="t" style="left:268.7px;top:155.51px;font-size:14.4px;line-height:14.4px;color:#fff;transform:scaleX(0.7900);">112.59</span>
<span class="t" style="left:312.4px;top:155.51px;font-size:14.4px;line-height:14.4px;color:#fff;transform:scaleX(0.7900);">0.04</span>
<span class="t" style="left:344.5px;top:155.51px;font-size:14.4px;line-height:14.4px;color:#fff;transform:scaleX(0.7900);">31.49</span>
<span class="t" style="left:396.6px;top:155.51px;font-size:14.4px;line-height:14.4px;color:#fff;transform:scaleX(0.7900);">112.49</span>
<span class="t" style="left:449.4px;top:155.51px;font-size:14.4px;line-height:14.4px;color:#fff;transform:scaleX(0.7900);">61.64</span>
<span class="t" style="left:496.3px;top:155.51px;font-size:14.4px;line-height:14.4px;color:#fff;transform:scaleX(0.7900);">42.44</span>
<span class="t" style="left:537.2px;top:155.51px;font-size:14.4px;line-height:14.4px;color:#fff;transform:scaleX(0.7900);">75.86</span>
<span class="t" style="left:601.7px;top:155.51px;font-size:14.4px;line-height:14.4px;color:#fff;transform:scaleX(0.7900);">136.72</span>
<span class="t" style="left:670px;top:155.51px;font-size:14.4px;line-height:14.4px;color:#fff;transform:scaleX(0.7900);">92.85</span>
<span class="t" style="left:712.6px;top:155.51px;font-size:14.4px;line-height:14.4px;color:#fff;transform:scaleX(0.7900);">37.80</span>
<span class="t" style="left:783.1px;top:155.51px;font-size:14.4px;line-height:14.4px;color:#fff;transform:scaleX(0.7900);">60.42</span>
<span class="t" style="left:859.5px;top:155.51px;font-size:14.4px;line-height:14.4px;color:#fff;transform:scaleX(0.7900);">21.26</span>
<span class="t" style="left:897.6px;top:155.51px;font-size:14.4px;line-height:14.4px;color:#fff;transform:scaleX(0.7900);">141.22</span>
<span class="t" style="left:968.1px;top:155.51px;font-size:14.4px;line-height:14.4px;color:#fff;transform:scaleX(0.7900);">141.22</span>
<span class="t" style="left:1044.2px;top:155.51px;font-size:14.4px;line-height:14.4px;color:#fff;transform:scaleX(0.7900);">19.44</span>
<span class="t" style="left:1080.1px;top:155.51px;font-size:14.4px;line-height:14.4px;color:#fff;transform:scaleX(0.7900);">74.27</span>
<span class="t" style="left:1116.5px;top:155.51px;font-size:14.4px;line-height:14.4px;color:#fff;transform:scaleX(0.7900);">36.91</span>
<span class="t" style="left:1152.6px;top:155.51px;font-size:14.4px;line-height:14.4px;color:#fff;transform:scaleX(0.7900);">193.93</span>
<span class="t" style="left:1194.8px;top:155.51px;font-size:14.4px;line-height:14.4px;color:#fff;transform:scaleX(0.7900);">60.69</span>
<span class="t" style="left:1244.5px;top:155.51px;font-size:14.4px;line-height:14.4px;color:#fff;transform:scaleX(0.7900);">61.35</span>
<span class="t" style="left:1280.4px;top:155.51px;font-size:14.4px;line-height:14.4px;color:#fff;transform:scaleX(0.7900);">73.91</span>
<span class="t" style="left:1335.1px;top:155.51px;font-size:14.4px;line-height:14.4px;color:#fff;transform:scaleX(0.7900);">223.20</span>
<span class="t" style="left:1401.2px;top:155.51px;font-size:14.4px;line-height:14.4px;color:#fff;transform:scaleX(0.7900);">25.61</span>
<div style="left:9.8px;top:174.7px;width:1417.2px;height:24.6px;background:#444444"></div>
<div style="left:0px;top:174.7px;width:9.8px;height:24.6px;background:linear-gradient(#1c1c1c,#2a2a2a)"></div>
<span class="t" style="left:13px;top:180.11px;font-size:14.4px;line-height:14.4px;color:#fff;transform:scaleX(0.7900);">ΔE 2000</span>
<span class="t" style="left:95.2px;top:180.11px;font-size:14.4px;line-height:14.4px;color:#fff;transform:scaleX(0.7900);">4.89</span>
<span class="t" style="left:137.2px;top:180.11px;font-size:14.4px;line-height:14.4px;color:#fff;transform:scaleX(0.7900);">3.19</span>
<span class="t" style="left:181px;top:180.11px;font-size:14.4px;line-height:14.4px;color:#fff;transform:scaleX(0.7900);">2.72</span>
<span class="t" style="left:225px;top:180.11px;font-size:14.4px;line-height:14.4px;color:#fff;transform:scaleX(0.7900);">1.84</span>
<span class="t" style="left:268.7px;top:180.11px;font-size:14.4px;line-height:14.4px;color:#fff;transform:scaleX(0.7900);">1.95</span>
<span class="t" style="left:312.4px;top:180.11px;font-size:14.4px;line-height:14.4px;color:#fff;transform:scaleX(0.7900);">0.07</span>
<span class="t" style="left:344.5px;top:180.11px;font-size:14.4px;line-height:14.4px;color:#fff;transform:scaleX(0.7900);">4.38</span>
<span class="t" style="left:396.6px;top:180.11px;font-size:14.4px;line-height:14.4px;color:#fff;transform:scaleX(0.7900);">4.94</span>
<span class="t" style="left:449.4px;top:180.11px;font-size:14.4px;line-height:14.4px;color:#fff;transform:scaleX(0.7900);">3.29</span>
<span class="t" style="left:496.3px;top:180.11px;font-size:14.4px;line-height:14.4px;color:#fff;transform:scaleX(0.7900);">2.45</span>
<span class="t" style="left:537.2px;top:180.11px;font-size:14.4px;line-height:14.4px;color:#fff;transform:scaleX(0.7900);">2.44</span>
<span class="t" style="left:601.7px;top:180.11px;font-size:14.4px;line-height:14.4px;color:#fff;transform:scaleX(0.7900);">6.41</span>
<span class="t" style="left:670px;top:180.11px;font-size:14.4px;line-height:14.4px;color:#fff;transform:scaleX(0.7900);">6.00</span>
<span class="t" style="left:712.6px;top:180.11px;font-size:14.4px;line-height:14.4px;color:#fff;transform:scaleX(0.7900);">2.81</span>
<span class="t" style="left:783.1px;top:180.11px;font-size:14.4px;line-height:14.4px;color:#fff;transform:scaleX(0.7900);">5.86</span>
<span class="t" style="left:859.5px;top:180.11px;font-size:14.4px;line-height:14.4px;color:#fff;transform:scaleX(0.7900);">2.72</span>
<span class="t" style="left:897.6px;top:180.11px;font-size:14.4px;line-height:14.4px;color:#fff;transform:scaleX(0.7900);">3.04</span>
<span class="t" style="left:968.1px;top:180.11px;font-size:14.4px;line-height:14.4px;color:#fff;transform:scaleX(0.7900);">7.65</span>
<span class="t" style="left:1044.2px;top:180.11px;font-size:14.4px;line-height:14.4px;color:#fff;transform:scaleX(0.7900);">2.49</span>
<span class="t" style="left:1080.1px;top:180.11px;font-size:14.4px;line-height:14.4px;color:#fff;transform:scaleX(0.7900);">6.07</span>
<span class="t" style="left:1116.5px;top:180.11px;font-size:14.4px;line-height:14.4px;color:#fff;transform:scaleX(0.7900);">5.03</span>
<span class="t" style="left:1152.6px;top:180.11px;font-size:14.4px;line-height:14.4px;color:#fff;transform:scaleX(0.7900);">5.94</span>
<span class="t" style="left:1194.8px;top:180.11px;font-size:14.4px;line-height:14.4px;color:#fff;transform:scaleX(0.7900);">4.44</span>
<span class="t" style="left:1244.5px;top:180.11px;font-size:14.4px;line-height:14.4px;color:#fff;transform:scaleX(0.7900);">5.19</span>
<span class="t" style="left:1280.4px;top:180.11px;font-size:14.4px;line-height:14.4px;color:#fff;transform:scaleX(0.7900);">5.29</span>
<span class="t" style="left:1335.1px;top:180.11px;font-size:14.4px;line-height:14.4px;color:#fff;transform:scaleX(0.7900);">2.92</span>
<span class="t" style="left:1401.2px;top:180.11px;font-size:14.4px;line-height:14.4px;color:#fff;transform:scaleX(0.7900);">2.62</span>
<div style="left:9.8px;top:199.3px;width:1417.2px;height:25px;background:#7f7f7f"></div>
<div style="left:0px;top:199.3px;width:9.8px;height:25px;background:linear-gradient(#2a2a2a,#3a3a3a)"></div>
<span class="t" style="left:13px;top:204.91px;font-size:14.4px;line-height:14.4px;color:#fff;transform:scaleX(0.7900);">dEITP</span>
<span class="t" style="left:95.2px;top:204.91px;font-size:14.4px;line-height:14.4px;color:#fff;transform:scaleX(0.7900);">3.12</span>
<span class="t" style="left:137.2px;top:204.91px;font-size:14.4px;line-height:14.4px;color:#fff;transform:scaleX(0.7900);">2.19</span>
<span class="t" style="left:181px;top:204.91px;font-size:14.4px;line-height:14.4px;color:#fff;transform:scaleX(0.7900);">2.19</span>
<span class="t" style="left:225px;top:204.91px;font-size:14.4px;line-height:14.4px;color:#fff;transform:scaleX(0.7900);">1.63</span>
<span class="t" style="left:268.7px;top:204.91px;font-size:14.4px;line-height:14.4px;color:#fff;transform:scaleX(0.7900);">2.13</span>
<span class="t" style="left:312.4px;top:204.91px;font-size:14.4px;line-height:14.4px;color:#fff;transform:scaleX(0.7900);">2.36</span>
<span class="t" style="left:344.5px;top:204.91px;font-size:14.4px;line-height:14.4px;color:#fff;transform:scaleX(0.7900);">16.74</span>
<span class="t" style="left:396.6px;top:204.91px;font-size:14.4px;line-height:14.4px;color:#fff;transform:scaleX(0.7900);">14.94</span>
<span class="t" style="left:449.4px;top:204.91px;font-size:14.4px;line-height:14.4px;color:#fff;transform:scaleX(0.7900);">11.91</span>
<span class="t" style="left:496.3px;top:204.91px;font-size:14.4px;line-height:14.4px;color:#fff;transform:scaleX(0.7900);">7.16</span>
<span class="t" style="left:537.2px;top:204.91px;font-size:14.4px;line-height:14.4px;color:#fff;transform:scaleX(0.7900);">6.12</span>
<span class="t" style="left:601.7px;top:204.91px;font-size:14.4px;line-height:14.4px;color:#fff;transform:scaleX(0.7900);">22.03</span>
<span class="t" style="left:670px;top:204.91px;font-size:14.4px;line-height:14.4px;color:#fff;transform:scaleX(0.7900);">33.37</span>
<span class="t" style="left:712.6px;top:204.91px;font-size:14.4px;line-height:14.4px;color:#fff;transform:scaleX(0.7900);">14.73</span>
<span class="t" style="left:783.1px;top:204.91px;font-size:14.4px;line-height:14.4px;color:#fff;transform:scaleX(0.7900);">39.25</span>
<span class="t" style="left:859.5px;top:204.91px;font-size:14.4px;line-height:14.4px;color:#fff;transform:scaleX(0.7900);">10.11</span>
<span class="t" style="left:897.6px;top:204.91px;font-size:14.4px;line-height:14.4px;color:#fff;transform:scaleX(0.7900);">16.28</span>
<span class="t" style="left:968.1px;top:204.91px;font-size:14.4px;line-height:14.4px;color:#fff;transform:scaleX(0.7900);">31.24</span>
<span class="t" style="left:1044.2px;top:204.91px;font-size:14.4px;line-height:14.4px;color:#fff;transform:scaleX(0.7900);">18.96</span>
<span class="t" style="left:1080.1px;top:204.91px;font-size:14.4px;line-height:14.4px;color:#fff;transform:scaleX(0.7900);">23.52</span>
<span class="t" style="left:1116.5px;top:204.91px;font-size:14.4px;line-height:14.4px;color:#fff;transform:scaleX(0.7900);">35.14</span>
<span class="t" style="left:1152.6px;top:204.91px;font-size:14.4px;line-height:14.4px;color:#fff;transform:scaleX(0.7900);">28.14</span>
<span class="t" style="left:1194.8px;top:204.91px;font-size:14.4px;line-height:14.4px;color:#fff;transform:scaleX(0.7900);">28.68</span>
<span class="t" style="left:1244.5px;top:204.91px;font-size:14.4px;line-height:14.4px;color:#fff;transform:scaleX(0.7900);">23.05</span>
<span class="t" style="left:1280.4px;top:204.91px;font-size:14.4px;line-height:14.4px;color:#fff;transform:scaleX(0.7900);">16.49</span>
<span class="t" style="left:1335.1px;top:204.91px;font-size:14.4px;line-height:14.4px;color:#fff;transform:scaleX(0.7900);">12.52</span>
<span class="t" style="left:1401.2px;top:204.91px;font-size:14.4px;line-height:14.4px;color:#fff;transform:scaleX(0.7900);">37.83</span>
<div style="left:9.8px;top:224.3px;width:1417.2px;height:14.8px;background:#666"></div>
<div style="left:11px;top:225.3px;width:10px;height:12.8px;background:#8c8c8c;border-radius:2px"></div>
<div style="left:1416px;top:225.3px;width:10px;height:12.8px;background:#8c8c8c;border-radius:2px"></div>
<div style="left:23.4px;top:225.3px;width:840.6px;height:12.8px;background:#4d4d4d;border-radius:6px"></div>
<svg style="left:13.5px;top:227.80000000000007px" width="5" height="8" viewBox="0 0 5 8"><path d="M4.5 0v8L0.5 4z" fill="#333"/></svg>
<svg style="left:1418.5px;top:227.80000000000007px" width="5" height="8" viewBox="0 0 5 8"><path d="M0.5 0v8l4-4z" fill="#333"/></svg>
</div>
<div style="left:150.3px;top:1005px;width:1530px;height:53px;overflow:hidden">
<div style="left:1px;top:6.2px;width:36.7px;height:36.4px;background:linear-gradient(#a8a8a8,#8c8c8c 45%,#707070);border-radius:3px 3px 0 0;box-shadow:inset 0 0 0 1px rgba(255,255,255,0.12)"></div>
<div style="left:4.7px;top:10.3px;width:29.7px;height:17.7px;background:#ffffff;border-radius:2.5px;box-shadow:inset 0 0 0 1px rgba(255,255,255,0.28)"></div>
<span class="t" style="left:9.41px;top:32.72px;font-size:8.6px;line-height:8.6px;color:#1c1c1c;transform:scaleX(0.9000);-webkit-text-stroke:0.25px #1c1c1c;">White</span>
<div style="left:40px;top:6.2px;width:36.7px;height:36.4px;background:linear-gradient(#a8a8a8,#8c8c8c 45%,#707070);border-radius:3px 3px 0 0;box-shadow:inset 0 0 0 1px rgba(255,255,255,0.12)"></div>
<div style="left:43.7px;top:10.3px;width:29.7px;height:17.7px;background:#e6e6e6;border-radius:2.5px;box-shadow:inset 0 0 0 1px rgba(255,255,255,0.28)"></div>
<span class="t" style="left:44.54px;top:32.72px;font-size:8.6px;line-height:8.6px;color:#1c1c1c;transform:scaleX(0.9000);-webkit-text-stroke:0.25px #1c1c1c;">Gray 80</span>
<div style="left:79px;top:6.2px;width:36.7px;height:36.4px;background:linear-gradient(#a8a8a8,#8c8c8c 45%,#707070);border-radius:3px 3px 0 0;box-shadow:inset 0 0 0 1px rgba(255,255,255,0.12)"></div>
<div style="left:82.7px;top:10.3px;width:29.7px;height:17.7px;background:#d2d2d2;border-radius:2.5px;box-shadow:inset 0 0 0 1px rgba(255,255,255,0.28)"></div>
<span class="t" style="left:83.54px;top:32.72px;font-size:8.6px;line-height:8.6px;color:#1c1c1c;transform:scaleX(0.9000);-webkit-text-stroke:0.25px #1c1c1c;">Gray 65</span>
<div style="left:118px;top:6.2px;width:36.7px;height:36.4px;background:linear-gradient(#a8a8a8,#8c8c8c 45%,#707070);border-radius:3px 3px 0 0;box-shadow:inset 0 0 0 1px rgba(255,255,255,0.12)"></div>
<div style="left:121.7px;top:10.3px;width:29.7px;height:17.7px;background:#bbbbbb;border-radius:2.5px;box-shadow:inset 0 0 0 1px rgba(255,255,255,0.28)"></div>
<span class="t" style="left:122.54px;top:32.72px;font-size:8.6px;line-height:8.6px;color:#1c1c1c;transform:scaleX(0.9000);-webkit-text-stroke:0.25px #1c1c1c;">Gray 50</span>
<div style="left:157px;top:6.2px;width:36.7px;height:36.4px;background:linear-gradient(#a8a8a8,#8c8c8c 45%,#707070);border-radius:3px 3px 0 0;box-shadow:inset 0 0 0 1px rgba(255,255,255,0.12)"></div>
<div style="left:160.7px;top:10.3px;width:29.7px;height:17.7px;background:#a1a1a1;border-radius:2.5px;box-shadow:inset 0 0 0 1px rgba(255,255,255,0.28)"></div>
<span class="t" style="left:161.54px;top:32.72px;font-size:8.6px;line-height:8.6px;color:#1c1c1c;transform:scaleX(0.9000);-webkit-text-stroke:0.25px #1c1c1c;">Gray 35</span>
<div style="left:196px;top:6.2px;width:36.7px;height:36.4px;background:linear-gradient(#a8a8a8,#8c8c8c 45%,#707070);border-radius:3px 3px 0 0;box-shadow:inset 0 0 0 1px rgba(255,255,255,0.12)"></div>
<div style="left:199.7px;top:10.3px;width:29.7px;height:17.7px;background:#000000;border-radius:2.5px;box-shadow:inset 0 0 0 1px rgba(255,255,255,0.28)"></div>
<span class="t" style="left:204.84px;top:32.72px;font-size:8.6px;line-height:8.6px;color:#1c1c1c;transform:scaleX(0.9000);-webkit-text-stroke:0.25px #1c1c1c;">Black</span>
<div style="left:235px;top:6.2px;width:36.7px;height:36.4px;background:linear-gradient(#a8a8a8,#8c8c8c 45%,#707070);border-radius:3px 3px 0 0;box-shadow:inset 0 0 0 1px rgba(255,255,255,0.12)"></div>
<div style="left:238.7px;top:10.3px;width:29.7px;height:17.7px;background:#735244;border-radius:2.5px;box-shadow:inset 0 0 0 1px rgba(255,255,255,0.28)"></div>
<span class="t" style="left:236.54px;top:32.72px;font-size:8.6px;line-height:8.6px;color:#1c1c1c;transform:scaleX(0.9000);-webkit-text-stroke:0.25px #1c1c1c;">Dark Skin</span>
<div style="left:274px;top:6.2px;width:36.7px;height:36.4px;background:linear-gradient(#a8a8a8,#8c8c8c 45%,#707070);border-radius:3px 3px 0 0;box-shadow:inset 0 0 0 1px rgba(255,255,255,0.12)"></div>
<div style="left:277.7px;top:10.3px;width:29.7px;height:17.7px;background:#c29682;border-radius:2.5px;box-shadow:inset 0 0 0 1px rgba(255,255,255,0.28)"></div>
<span class="t" style="left:275.31px;top:32.72px;font-size:8.6px;line-height:8.6px;color:#1c1c1c;transform:scaleX(0.9000);-webkit-text-stroke:0.25px #1c1c1c;">Light Skin</span>
<div style="left:313px;top:6.2px;width:36.7px;height:36.4px;background:linear-gradient(#a8a8a8,#8c8c8c 45%,#707070);border-radius:3px 3px 0 0;box-shadow:inset 0 0 0 1px rgba(255,255,255,0.12)"></div>
<div style="left:316.7px;top:10.3px;width:29.7px;height:17.7px;background:#627a9d;border-radius:2.5px;box-shadow:inset 0 0 0 1px rgba(255,255,255,0.28)"></div>
<span class="t" style="left:316.04px;top:32.72px;font-size:8.6px;line-height:8.6px;color:#1c1c1c;transform:scaleX(0.9000);-webkit-text-stroke:0.25px #1c1c1c;">Blue Sky</span>
<div style="left:352px;top:6.2px;width:36.7px;height:36.4px;background:linear-gradient(#a8a8a8,#8c8c8c 45%,#707070);border-radius:3px 3px 0 0;box-shadow:inset 0 0 0 1px rgba(255,255,255,0.12)"></div>
<div style="left:355.7px;top:10.3px;width:29.7px;height:17.7px;background:#576c43;border-radius:2.5px;box-shadow:inset 0 0 0 1px rgba(255,255,255,0.28)"></div>
<span class="t" style="left:357.62px;top:32.72px;font-size:8.6px;line-height:8.6px;color:#1c1c1c;transform:scaleX(0.9000);-webkit-text-stroke:0.25px #1c1c1c;">Foliage</span>
<div style="left:391px;top:6.2px;width:36.7px;height:36.4px;background:linear-gradient(#a8a8a8,#8c8c8c 45%,#707070);border-radius:3px 3px 0 0;box-shadow:inset 0 0 0 1px rgba(255,255,255,0.12)"></div>
<div style="left:394.7px;top:10.3px;width:29.7px;height:8.4px;background:#8580b1;border-radius:2.5px;box-shadow:inset 0 0 0 1px rgba(255,255,255,0.28)"></div>
<span class="t" style="left:401.56px;top:23.32px;font-size:8.6px;line-height:8.6px;color:#1c1c1c;transform:scaleX(0.9000);-webkit-text-stroke:0.25px #1c1c1c;">Blue</span>
<span class="t" style="left:397.69px;top:32.52px;font-size:8.6px;line-height:8.6px;color:#1c1c1c;transform:scaleX(0.9000);-webkit-text-stroke:0.25px #1c1c1c;">Flower</span>
<div style="left:430px;top:6.2px;width:36.7px;height:36.4px;background:linear-gradient(#a8a8a8,#8c8c8c 45%,#707070);border-radius:3px 3px 0 0;box-shadow:inset 0 0 0 1px rgba(255,255,255,0.12)"></div>
<div style="left:433.7px;top:10.3px;width:29.7px;height:8.4px;background:#67bdaa;border-radius:2.5px;box-shadow:inset 0 0 0 1px rgba(255,255,255,0.28)"></div>
<span class="t" style="left:437.77px;top:23.32px;font-size:8.6px;line-height:8.6px;color:#1c1c1c;transform:scaleX(0.9000);-webkit-text-stroke:0.25px #1c1c1c;">Bluish</span>
<span class="t" style="left:437.55px;top:32.52px;font-size:8.6px;line-height:8.6px;color:#1c1c1c;transform:scaleX(0.9000);-webkit-text-stroke:0.25px #1c1c1c;">Green</span>
<div style="left:469px;top:6.2px;width:36.7px;height:36.4px;background:linear-gradient(#a8a8a8,#8c8c8c 45%,#707070);border-radius:3px 3px 0 0;box-shadow:inset 0 0 0 1px rgba(255,255,255,0.12)"></div>
<div style="left:472.7px;top:10.3px;width:29.7px;height:17.7px;background:#d67e2c;border-radius:2.5px;box-shadow:inset 0 0 0 1px rgba(255,255,255,0.28)"></div>
<span class="t" style="left:474.4px;top:32.72px;font-size:8.6px;line-height:8.6px;color:#1c1c1c;transform:scaleX(0.9000);-webkit-text-stroke:0.25px #1c1c1c;">Orange</span>
<div style="left:508px;top:6.2px;width:36.7px;height:36.4px;background:linear-gradient(#a8a8a8,#8c8c8c 45%,#707070);border-radius:3px 3px 0 0;box-shadow:inset 0 0 0 1px rgba(255,255,255,0.12)"></div>
<div style="left:511.7px;top:10.3px;width:29.7px;height:8.4px;background:#505ba6;border-radius:2.5px;box-shadow:inset 0 0 0 1px rgba(255,255,255,0.28)"></div>
<span class="t" style="left:509.5px;top:23.32px;font-size:8.6px;line-height:8.6px;color:#1c1c1c;transform:scaleX(0.9000);-webkit-text-stroke:0.25px #1c1c1c;">Purplish</span>
<span class="t" style="left:509.5px;top:32.52px;font-size:8.6px;line-height:8.6px;color:#1c1c1c;transform:scaleX(0.9000);-webkit-text-stroke:0.25px #1c1c1c;">Blue</span>
<div style="left:547px;top:6.2px;width:36.7px;height:36.4px;background:linear-gradient(#a8a8a8,#8c8c8c 45%,#707070);border-radius:3px 3px 0 0;box-shadow:inset 0 0 0 1px rgba(255,255,255,0.12)"></div>
<div style="left:550.7px;top:10.3px;width:29.7px;height:8.4px;background:#c15a63;border-radius:2.5px;box-shadow:inset 0 0 0 1px rgba(255,255,255,0.28)"></div>
<span class="t" style="left:548.5px;top:23.32px;font-size:8.6px;line-height:8.6px;color:#1c1c1c;transform:scaleX(0.9000);-webkit-text-stroke:0.25px #1c1c1c;">Moderate</span>
<span class="t" style="left:548.5px;top:32.52px;font-size:8.6px;line-height:8.6px;color:#1c1c1c;transform:scaleX(0.9000);-webkit-text-stroke:0.25px #1c1c1c;">Red</span>
<div style="left:586px;top:6.2px;width:36.7px;height:36.4px;background:linear-gradient(#a8a8a8,#8c8c8c 45%,#707070);border-radius:3px 3px 0 0;box-shadow:inset 0 0 0 1px rgba(255,255,255,0.12)"></div>
<div style="left:589.7px;top:10.3px;width:29.7px;height:17.7px;background:#5e3c6c;border-radius:2.5px;box-shadow:inset 0 0 0 1px rgba(255,255,255,0.28)"></div>
<span class="t" style="left:593.12px;top:32.72px;font-size:8.6px;line-height:8.6px;color:#1c1c1c;transform:scaleX(0.9000);-webkit-text-stroke:0.25px #1c1c1c;">Purple</span>
<div style="left:625px;top:6.2px;width:36.7px;height:36.4px;background:linear-gradient(#a8a8a8,#8c8c8c 45%,#707070);border-radius:3px 3px 0 0;box-shadow:inset 0 0 0 1px rgba(255,255,255,0.12)"></div>
<div style="left:628.7px;top:10.3px;width:29.7px;height:8.4px;background:#9dbc40;border-radius:2.5px;box-shadow:inset 0 0 0 1px rgba(255,255,255,0.28)"></div>
<span class="t" style="left:632.26px;top:23.32px;font-size:8.6px;line-height:8.6px;color:#1c1c1c;transform:scaleX(0.9000);-webkit-text-stroke:0.25px #1c1c1c;">Yellow</span>
<span class="t" style="left:632.55px;top:32.52px;font-size:8.6px;line-height:8.6px;color:#1c1c1c;transform:scaleX(0.9000);-webkit-text-stroke:0.25px #1c1c1c;">Green</span>
<div style="left:664px;top:6.2px;width:36.7px;height:36.4px;background:linear-gradient(#a8a8a8,#8c8c8c 45%,#707070);border-radius:3px 3px 0 0;box-shadow:inset 0 0 0 1px rgba(255,255,255,0.12)"></div>
<div style="left:667.7px;top:10.3px;width:29.7px;height:8.4px;background:#e0a32e;border-radius:2.5px;box-shadow:inset 0 0 0 1px rgba(255,255,255,0.28)"></div>
<span class="t" style="left:669px;top:23.32px;font-size:8.6px;line-height:8.6px;color:#1c1c1c;transform:scaleX(0.9000);-webkit-text-stroke:0.25px #1c1c1c;">Orange</span>
<span class="t" style="left:669px;top:32.52px;font-size:8.6px;line-height:8.6px;color:#1c1c1c;transform:scaleX(0.9000);-webkit-text-stroke:0.25px #1c1c1c;">Yellow</span>
<div style="left:703px;top:6.2px;width:36.7px;height:36.4px;background:linear-gradient(#a8a8a8,#8c8c8c 45%,#707070);border-radius:3px 3px 0 0;box-shadow:inset 0 0 0 1px rgba(255,255,255,0.12)"></div>
<div style="left:706.7px;top:10.3px;width:29.7px;height:17.7px;background:#383d96;border-radius:2.5px;box-shadow:inset 0 0 0 1px rgba(255,255,255,0.28)"></div>
<span class="t" style="left:713.56px;top:32.72px;font-size:8.6px;line-height:8.6px;color:#1c1c1c;transform:scaleX(0.9000);-webkit-text-stroke:0.25px #1c1c1c;">Blue</span>
<div style="left:742px;top:6.2px;width:36.7px;height:36.4px;background:linear-gradient(#a8a8a8,#8c8c8c 45%,#707070);border-radius:3px 3px 0 0;box-shadow:inset 0 0 0 1px rgba(255,255,255,0.12)"></div>
<div style="left:745.7px;top:10.3px;width:29.7px;height:17.7px;background:#469449;border-radius:2.5px;box-shadow:inset 0 0 0 1px rgba(255,255,255,0.28)"></div>
<span class="t" style="left:749.55px;top:32.72px;font-size:8.6px;line-height:8.6px;color:#1c1c1c;transform:scaleX(0.9000);-webkit-text-stroke:0.25px #1c1c1c;">Green</span>
<div style="left:781px;top:6.2px;width:36.7px;height:36.4px;background:linear-gradient(#a8a8a8,#8c8c8c 45%,#707070);border-radius:3px 3px 0 0;box-shadow:inset 0 0 0 1px rgba(255,255,255,0.12)"></div>
<div style="left:784.7px;top:10.3px;width:29.7px;height:17.7px;background:#af363c;border-radius:2.5px;box-shadow:inset 0 0 0 1px rgba(255,255,255,0.28)"></div>
<span class="t" style="left:792.21px;top:32.72px;font-size:8.6px;line-height:8.6px;color:#1c1c1c;transform:scaleX(0.9000);-webkit-text-stroke:0.25px #1c1c1c;">Red</span>
<div style="left:820px;top:6.2px;width:36.7px;height:36.4px;background:linear-gradient(#a8a8a8,#8c8c8c 45%,#707070);border-radius:3px 3px 0 0;box-shadow:inset 0 0 0 1px rgba(255,255,255,0.12)"></div>
<div style="left:823.7px;top:10.3px;width:29.7px;height:17.7px;background:#e7c71f;border-radius:2.5px;box-shadow:inset 0 0 0 1px rgba(255,255,255,0.28)"></div>
<span class="t" style="left:827.26px;top:32.72px;font-size:8.6px;line-height:8.6px;color:#1c1c1c;transform:scaleX(0.9000);-webkit-text-stroke:0.25px #1c1c1c;">Yellow</span>
<div style="left:859px;top:6.2px;width:36.7px;height:36.4px;background:linear-gradient(#a8a8a8,#8c8c8c 45%,#707070);border-radius:3px 3px 0 0;box-shadow:inset 0 0 0 1px rgba(255,255,255,0.12)"></div>
<div style="left:862.7px;top:10.3px;width:29.7px;height:17.7px;background:#bb5695;border-radius:2.5px;box-shadow:inset 0 0 0 1px rgba(255,255,255,0.28)"></div>
<span class="t" style="left:862.25px;top:32.72px;font-size:8.6px;line-height:8.6px;color:#1c1c1c;transform:scaleX(0.9000);-webkit-text-stroke:0.25px #1c1c1c;">Magenta</span>
<div style="left:898px;top:6.2px;width:36.7px;height:36.4px;background:linear-gradient(#a8a8a8,#8c8c8c 45%,#707070);border-radius:3px 3px 0 0;box-shadow:inset 0 0 0 1px rgba(255,255,255,0.12)"></div>
<div style="left:901.7px;top:10.3px;width:29.7px;height:17.7px;background:#0885a1;border-radius:2.5px;box-shadow:inset 0 0 0 1px rgba(255,255,255,0.28)"></div>
<span class="t" style="left:907.27px;top:32.72px;font-size:8.6px;line-height:8.6px;color:#1c1c1c;transform:scaleX(0.9000);-webkit-text-stroke:0.25px #1c1c1c;">Cyan</span>
<div style="left:937px;top:6.2px;width:36.7px;height:36.4px;background:linear-gradient(#a8a8a8,#8c8c8c 45%,#707070);border-radius:3px 3px 0 0;box-shadow:inset 0 0 0 1px rgba(255,255,255,0.12)"></div>
<div style="left:940.7px;top:10.3px;width:29.7px;height:17.7px;background:#ff0000;border-radius:2.5px;box-shadow:inset 0 0 0 1px rgba(255,255,255,0.28)"></div>
<span class="t" style="left:937.55px;top:32.72px;font-size:8.6px;line-height:8.6px;color:#1c1c1c;transform:scaleX(0.8844);-webkit-text-stroke:0.25px #1c1c1c;">100% Red</span>
<div style="left:976px;top:6.2px;width:36.7px;height:36.4px;background:linear-gradient(#a8a8a8,#8c8c8c 45%,#707070);border-radius:3px 3px 0 0;box-shadow:inset 0 0 0 1px rgba(255,255,255,0.12)"></div>
<div style="left:979.7px;top:10.3px;width:29.7px;height:8.4px;background:#00ff00;border-radius:2.5px;box-shadow:inset 0 0 0 1px rgba(255,255,255,0.28)"></div>
<span class="t" style="left:984.41px;top:23.32px;font-size:8.6px;line-height:8.6px;color:#1c1c1c;transform:scaleX(0.9000);-webkit-text-stroke:0.25px #1c1c1c;">100%</span>
<span class="t" style="left:983.55px;top:32.52px;font-size:8.6px;line-height:8.6px;color:#1c1c1c;transform:scaleX(0.9000);-webkit-text-stroke:0.25px #1c1c1c;">Green</span>
<div style="left:1015px;top:6.2px;width:36.7px;height:36.4px;background:linear-gradient(#a8a8a8,#8c8c8c 45%,#707070);border-radius:3px 3px 0 0;box-shadow:inset 0 0 0 1px rgba(255,255,255,0.12)"></div>
<div style="left:1018.7px;top:10.3px;width:29.7px;height:8.4px;background:#0000ff;border-radius:2.5px;box-shadow:inset 0 0 0 1px rgba(255,255,255,0.28)"></div>
<span class="t" style="left:1023.41px;top:23.32px;font-size:8.6px;line-height:8.6px;color:#1c1c1c;transform:scaleX(0.9000);-webkit-text-stroke:0.25px #1c1c1c;">100%</span>
<span class="t" style="left:1025.56px;top:32.52px;font-size:8.6px;line-height:8.6px;color:#1c1c1c;transform:scaleX(0.9000);-webkit-text-stroke:0.25px #1c1c1c;">Blue</span>
<div style="left:1054px;top:6.2px;width:36.7px;height:36.4px;background:linear-gradient(#a8a8a8,#8c8c8c 45%,#707070);border-radius:3px 3px 0 0;box-shadow:inset 0 0 0 1px rgba(255,255,255,0.12)"></div>
<div style="left:1057.7px;top:10.3px;width:29.7px;height:8.4px;background:#00ffff;border-radius:2.5px;box-shadow:inset 0 0 0 1px rgba(255,255,255,0.28)"></div>
<span class="t" style="left:1062.41px;top:23.32px;font-size:8.6px;line-height:8.6px;color:#1c1c1c;transform:scaleX(0.9000);-webkit-text-stroke:0.25px #1c1c1c;">100%</span>
<span class="t" style="left:1063.27px;top:32.52px;font-size:8.6px;line-height:8.6px;color:#1c1c1c;transform:scaleX(0.9000);-webkit-text-stroke:0.25px #1c1c1c;">Cyan</span>
<div style="left:1093px;top:6.2px;width:36.7px;height:36.4px;background:linear-gradient(#a8a8a8,#8c8c8c 45%,#707070);border-radius:3px 3px 0 0;box-shadow:inset 0 0 0 1px rgba(255,255,255,0.12)"></div>
<div style="left:1096.7px;top:10.3px;width:29.7px;height:8.4px;background:#ff00ff;border-radius:2.5px;box-shadow:inset 0 0 0 1px rgba(255,255,255,0.28)"></div>
<span class="t" style="left:1094.5px;top:23.32px;font-size:8.6px;line-height:8.6px;color:#1c1c1c;transform:scaleX(0.9000);-webkit-text-stroke:0.25px #1c1c1c;">100%</span>
<span class="t" style="left:1094.5px;top:32.52px;font-size:8.6px;line-height:8.6px;color:#1c1c1c;transform:scaleX(0.9000);-webkit-text-stroke:0.25px #1c1c1c;">Magenta</span>
<div style="left:1132px;top:6.2px;width:36.7px;height:36.4px;background:linear-gradient(#a8a8a8,#8c8c8c 45%,#707070);border-radius:3px 3px 0 0;box-shadow:inset 0 0 0 1px rgba(255,255,255,0.12)"></div>
<div style="left:1135.7px;top:10.3px;width:29.7px;height:8.4px;background:#ffff00;border-radius:2.5px;box-shadow:inset 0 0 0 1px rgba(255,255,255,0.28)"></div>
<span class="t" style="left:1140.41px;top:23.32px;font-size:8.6px;line-height:8.6px;color:#1c1c1c;transform:scaleX(0.9000);-webkit-text-stroke:0.25px #1c1c1c;">100%</span>
<span class="t" style="left:1139.26px;top:32.52px;font-size:8.6px;line-height:8.6px;color:#1c1c1c;transform:scaleX(0.9000);-webkit-text-stroke:0.25px #1c1c1c;">Yellow</span>
<div style="left:1171px;top:6.2px;width:36.7px;height:36.4px;background:linear-gradient(#a8a8a8,#8c8c8c 45%,#707070);border-radius:3px 3px 0 0;box-shadow:inset 0 0 0 1px rgba(255,255,255,0.12)"></div>
<div style="left:1174.7px;top:10.3px;width:29.7px;height:17.7px;background:#7a4a30;border-radius:2.5px;box-shadow:inset 0 0 0 1px rgba(255,255,255,0.28)"></div>
<span class="t" style="left:1184.57px;top:32.72px;font-size:8.6px;line-height:8.6px;color:#1c1c1c;transform:scaleX(0.9000);-webkit-text-stroke:0.25px #1c1c1c;">2E</span>
<div style="left:1210px;top:6.2px;width:36.7px;height:36.4px;background:linear-gradient(#a8a8a8,#8c8c8c 45%,#707070);border-radius:3px 3px 0 0;box-shadow:inset 0 0 0 1px rgba(255,255,255,0.12)"></div>
<div style="left:1213.7px;top:10.3px;width:29.7px;height:17.7px;background:#c8906a;border-radius:2.5px;box-shadow:inset 0 0 0 1px rgba(255,255,255,0.28)"></div>
<span class="t" style="left:1223.79px;top:32.72px;font-size:8.6px;line-height:8.6px;color:#1c1c1c;transform:scaleX(0.9000);-webkit-text-stroke:0.25px #1c1c1c;">2F</span>
<div style="left:1249px;top:6.2px;width:36.7px;height:36.4px;background:linear-gradient(#a8a8a8,#8c8c8c 45%,#707070);border-radius:3px 3px 0 0;box-shadow:inset 0 0 0 1px rgba(255,255,255,0.12)"></div>
<div style="left:1252.7px;top:10.3px;width:29.7px;height:17.7px;background:#f8d0a0;border-radius:2.5px;box-shadow:inset 0 0 0 1px rgba(255,255,255,0.28)"></div>
<span class="t" style="left:1262.57px;top:32.72px;font-size:8.6px;line-height:8.6px;color:#1c1c1c;transform:scaleX(0.9000);-webkit-text-stroke:0.25px #1c1c1c;">2K</span>
<div style="left:1288px;top:6.2px;width:36.7px;height:36.4px;background:linear-gradient(#a8a8a8,#8c8c8c 45%,#707070);border-radius:3px 3px 0 0;box-shadow:inset 0 0 0 1px rgba(255,255,255,0.12)"></div>
<div style="left:1291.7px;top:10.3px;width:29.7px;height:17.7px;background:#f8cdb8;border-radius:2.5px;box-shadow:inset 0 0 0 1px rgba(255,255,255,0.28)"></div>
<span class="t" style="left:1301.35px;top:32.72px;font-size:8.6px;line-height:8.6px;color:#1c1c1c;transform:scaleX(0.9000);-webkit-text-stroke:0.25px #1c1c1c;">5D</span>
<div style="left:1327px;top:6.2px;width:36.7px;height:36.4px;background:linear-gradient(#a8a8a8,#8c8c8c 45%,#707070);border-radius:3px 3px 0 0;box-shadow:inset 0 0 0 1px rgba(255,255,255,0.12)"></div>
<div style="left:1330.7px;top:10.3px;width:29.7px;height:17.7px;background:#f0b088;border-radius:2.5px;box-shadow:inset 0 0 0 1px rgba(255,255,255,0.28)"></div>
<span class="t" style="left:1340.57px;top:32.72px;font-size:8.6px;line-height:8.6px;color:#1c1c1c;transform:scaleX(0.9000);-webkit-text-stroke:0.25px #1c1c1c;">7E</span>
<div style="left:1366px;top:6.2px;width:36.7px;height:36.4px;background:linear-gradient(#a8a8a8,#8c8c8c 45%,#707070);border-radius:3px 3px 0 0;box-shadow:inset 0 0 0 1px rgba(255,255,255,0.12)"></div>
<div style="left:1369.7px;top:10.3px;width:29.7px;height:17.7px;background:#c89868;border-radius:2.5px;box-shadow:inset 0 0 0 1px rgba(255,255,255,0.28)"></div>
<span class="t" style="left:1379.79px;top:32.72px;font-size:8.6px;line-height:8.6px;color:#1c1c1c;transform:scaleX(0.9000);-webkit-text-stroke:0.25px #1c1c1c;">7F</span>
<div style="left:1405px;top:6.2px;width:36.7px;height:36.4px;background:linear-gradient(#a8a8a8,#8c8c8c 45%,#707070);border-radius:3px 3px 0 0;box-shadow:inset 0 0 0 1px rgba(255,255,255,0.12)"></div>
<div style="left:1408.7px;top:10.3px;width:29.7px;height:17.7px;background:#8d5e38;border-radius:2.5px;box-shadow:inset 0 0 0 1px rgba(255,255,255,0.28)"></div>
<span class="t" style="left:1418.14px;top:32.72px;font-size:8.6px;line-height:8.6px;color:#1c1c1c;transform:scaleX(0.9000);-webkit-text-stroke:0.25px #1c1c1c;">7G</span>
<div style="left:1444px;top:6.2px;width:36.7px;height:36.4px;background:linear-gradient(#a8a8a8,#8c8c8c 45%,#707070);border-radius:3px 3px 0 0;box-shadow:inset 0 0 0 1px rgba(255,255,255,0.12)"></div>
<div style="left:1447.7px;top:10.3px;width:29.7px;height:17.7px;background:#d0a078;border-radius:2.5px;box-shadow:inset 0 0 0 1px rgba(255,255,255,0.28)"></div>
<span class="t" style="left:1457.35px;top:32.72px;font-size:8.6px;line-height:8.6px;color:#1c1c1c;transform:scaleX(0.9000);-webkit-text-stroke:0.25px #1c1c1c;">7H</span>
<div style="left:1483px;top:6.2px;width:36.7px;height:36.4px;background:linear-gradient(#a8a8a8,#8c8c8c 45%,#707070);border-radius:3px 3px 0 0;box-shadow:inset 0 0 0 1px rgba(255,255,255,0.12)"></div>
<div style="left:1486.7px;top:10.3px;width:29.7px;height:17.7px;background:#b8703a;border-radius:2.5px;box-shadow:inset 0 0 0 1px rgba(255,255,255,0.28)"></div>
<span class="t" style="left:1498.07px;top:32.72px;font-size:8.6px;line-height:8.6px;color:#1c1c1c;transform:scaleX(0.9000);-webkit-text-stroke:0.25px #1c1c1c;">7I</span>
<div style="left:1522px;top:6.2px;width:36.7px;height:36.4px;background:linear-gradient(#a8a8a8,#8c8c8c 45%,#707070);border-radius:3px 3px 0 0;box-shadow:inset 0 0 0 1px rgba(255,255,255,0.12)"></div>
<div style="left:1525.7px;top:10.3px;width:29.7px;height:17.7px;background:#d8986c;border-radius:2.5px;box-shadow:inset 0 0 0 1px rgba(255,255,255,0.28)"></div>
<span class="t" style="left:1536.21px;top:32.72px;font-size:8.6px;line-height:8.6px;color:#1c1c1c;transform:scaleX(0.9000);-webkit-text-stroke:0.25px #1c1c1c;">7J</span>
</div>
<div style="left:150.3px;top:1048.6px;width:1530px;height:9.4px;background:#666"></div>
<div style="left:151px;top:1049.2px;width:9.3px;height:8.8px;background:#8c8c8c;border-radius:1.5px"></div>
<svg style="left:153.5px;top:1050.5px" width="4" height="6" viewBox="0 0 4 6"><path d="M3.7 0v6L0.3 3z" fill="#222"/></svg>
<div style="left:161.2px;top:1049.4px;width:1252px;height:8.6px;background:#4b4b4b;border-radius:4px"></div>
<div style="left:1667.5px;top:1049.2px;width:9.3px;height:8.8px;background:#8c8c8c;border-radius:1.5px"></div>
<svg style="left:1670.5px;top:1050.5px" width="4" height="6" viewBox="0 0 4 6"><path d="M0.3 0v6l3.4-3z" fill="#222"/></svg>
<div style="left:1678px;top:1030px;width:36.5px;height:28px;background:linear-gradient(#7a7a7a,#5e5e5e)"></div>
<div style="left:1685px;top:1031px;width:22.5px;height:24px;background:linear-gradient(#9a9a9a,#777);border:1.5px solid #2a2a2a;border-radius:4px;box-sizing:border-box"></div>
<div style="left:1691.5px;top:1037px;width:10px;height:10.5px;background:#000"></div>
<div style="left:1714.6px;top:1011.5px;width:135px;height:23px;background:linear-gradient(#8e8e8e,#6c6c6c)"></div>
<div style="left:1849.6px;top:1011.5px;width:70.4px;height:23px;background:linear-gradient(#3c3c3c,#2c2c2c)"></div>
<div style="left:1723.5px;top:1014.5px;width:16px;height:16px;border-radius:50%;background:radial-gradient(circle at 50% 40%,#b0b0b0,#777)"></div>
<div style="left:1757.3px;top:1014.5px;width:16px;height:16px;border-radius:50%;background:radial-gradient(circle at 50% 40%,#b0b0b0,#777)"></div>
<div style="left:1747.9px;top:1012px;width:1px;height:22px;background:#5a5a5a"></div>
<div style="left:1791.1px;top:1014.5px;width:16px;height:16px;border-radius:50%;background:radial-gradient(circle at 50% 40%,#b0b0b0,#777)"></div>
<div style="left:1781.7px;top:1012px;width:1px;height:22px;background:#5a5a5a"></div>
<div style="left:1824.9px;top:1014.5px;width:16px;height:16px;border-radius:50%;background:radial-gradient(circle at 50% 40%,#b0b0b0,#777)"></div>
<div style="left:1815.5px;top:1012px;width:1px;height:22px;background:#5a5a5a"></div>
<div style="left:1859px;top:1015px;width:14px;height:14px;border-radius:50%;background:radial-gradient(circle at 50% 40%,#555,#333)"></div>
<div style="left:1893px;top:1015px;width:14px;height:14px;border-radius:50%;background:radial-gradient(circle at 50% 40%,#555,#333)"></div>
<div style="left:1714.6px;top:1034.5px;width:205.4px;height:23.5px;background:linear-gradient(#a6a6a6,#8c8c8c 50%,#7a7a7a);border-radius:3px 0 0 0;box-shadow:inset 0 1px 0 #c4c4c4"></div>
<div style="left:1815.6px;top:1035px;width:1.2px;height:23px;background:#5e5e5e"></div>
<div style="left:1730.5px;top:1038.5px;width:15px;height:15px;border-radius:50%;background:radial-gradient(circle at 50% 40%,#bdbdbd,#8a8a8a)"></div>
<div style="left:1890.5px;top:1038.5px;width:15px;height:15px;border-radius:50%;background:radial-gradient(circle at 50% 40%,#bdbdbd,#8a8a8a)"></div>
<span class="t" style="left:1734.66px;top:1040.44px;font-size:12px;line-height:12px;color:#222;">«</span>
<span class="t" style="left:1894.66px;top:1040.44px;font-size:12px;line-height:12px;color:#222;">»</span>
<span class="t" style="left:1757.8px;top:1037.72px;font-size:16.4px;line-height:16.4px;color:#262626;transform:scaleX(1.0315);">Back</span>
<span class="t" style="left:1837.4px;top:1037.72px;font-size:16.4px;line-height:16.4px;color:#262626;transform:scaleX(1.1453);">Next</span>
<svg style="left:1625px;top:990px" width="100" height="68" viewBox="0 0 100 68"><g fill="none" stroke-linejoin="round" stroke-linecap="round"><path d="M46 36 L43.7 14.7 L6.7 6.7 L9.1 40 L29.7 54.1 L71.9 42 L43 37.5 L15.6 38.6" stroke="#f0dada" stroke-opacity="0.7" stroke-width="5.4"/><path d="M46 36 L43.7 14.7 L6.7 6.7 L9.1 40 L29.7 54.1 L71.9 42 L43 37.5 L15.6 38.6" stroke="#96242e" stroke-opacity="0.88" stroke-width="3.4"/><path d="M17 38.5 L45 37.6" stroke="#f4dcd0" stroke-opacity="0.75" stroke-width="1.2"/><path d="M22 18.9 L28.8 32.5 L48.9 5.3" stroke="#eee" stroke-opacity="0.75" stroke-width="4.6"/><path d="M22 18.9 L28.8 32.5 L48.9 5.3" stroke="#3c3436" stroke-opacity="0.92" stroke-width="2.6"/></g></svg>
<span class="t" style="-webkit-text-stroke:2.4px rgba(238,215,215,0.8);paint-order:stroke fill;left:1676.2px;top:1002.67px;font-size:27.8px;line-height:27.8px;color:rgba(128,26,40,0.84);font-weight:700;transform:scaleX(0.9246);">NOTEBOOK</span>
<span class="t" style="-webkit-text-stroke:3.2px rgba(232,232,232,0.9);left:1825.3px;top:1002.67px;font-size:27.8px;line-height:27.8px;color:rgba(0,0,0,0);transform:scaleX(0.8838);">CHECK</span>
<span class="t" style="-webkit-text-stroke:1.1px rgba(34,34,36,0.95);left:1825.3px;top:1002.67px;font-size:27.8px;line-height:27.8px;color:rgba(34,34,36,0.95);transform:scaleX(0.8838);">CHECK</span>
</div></body></html>
